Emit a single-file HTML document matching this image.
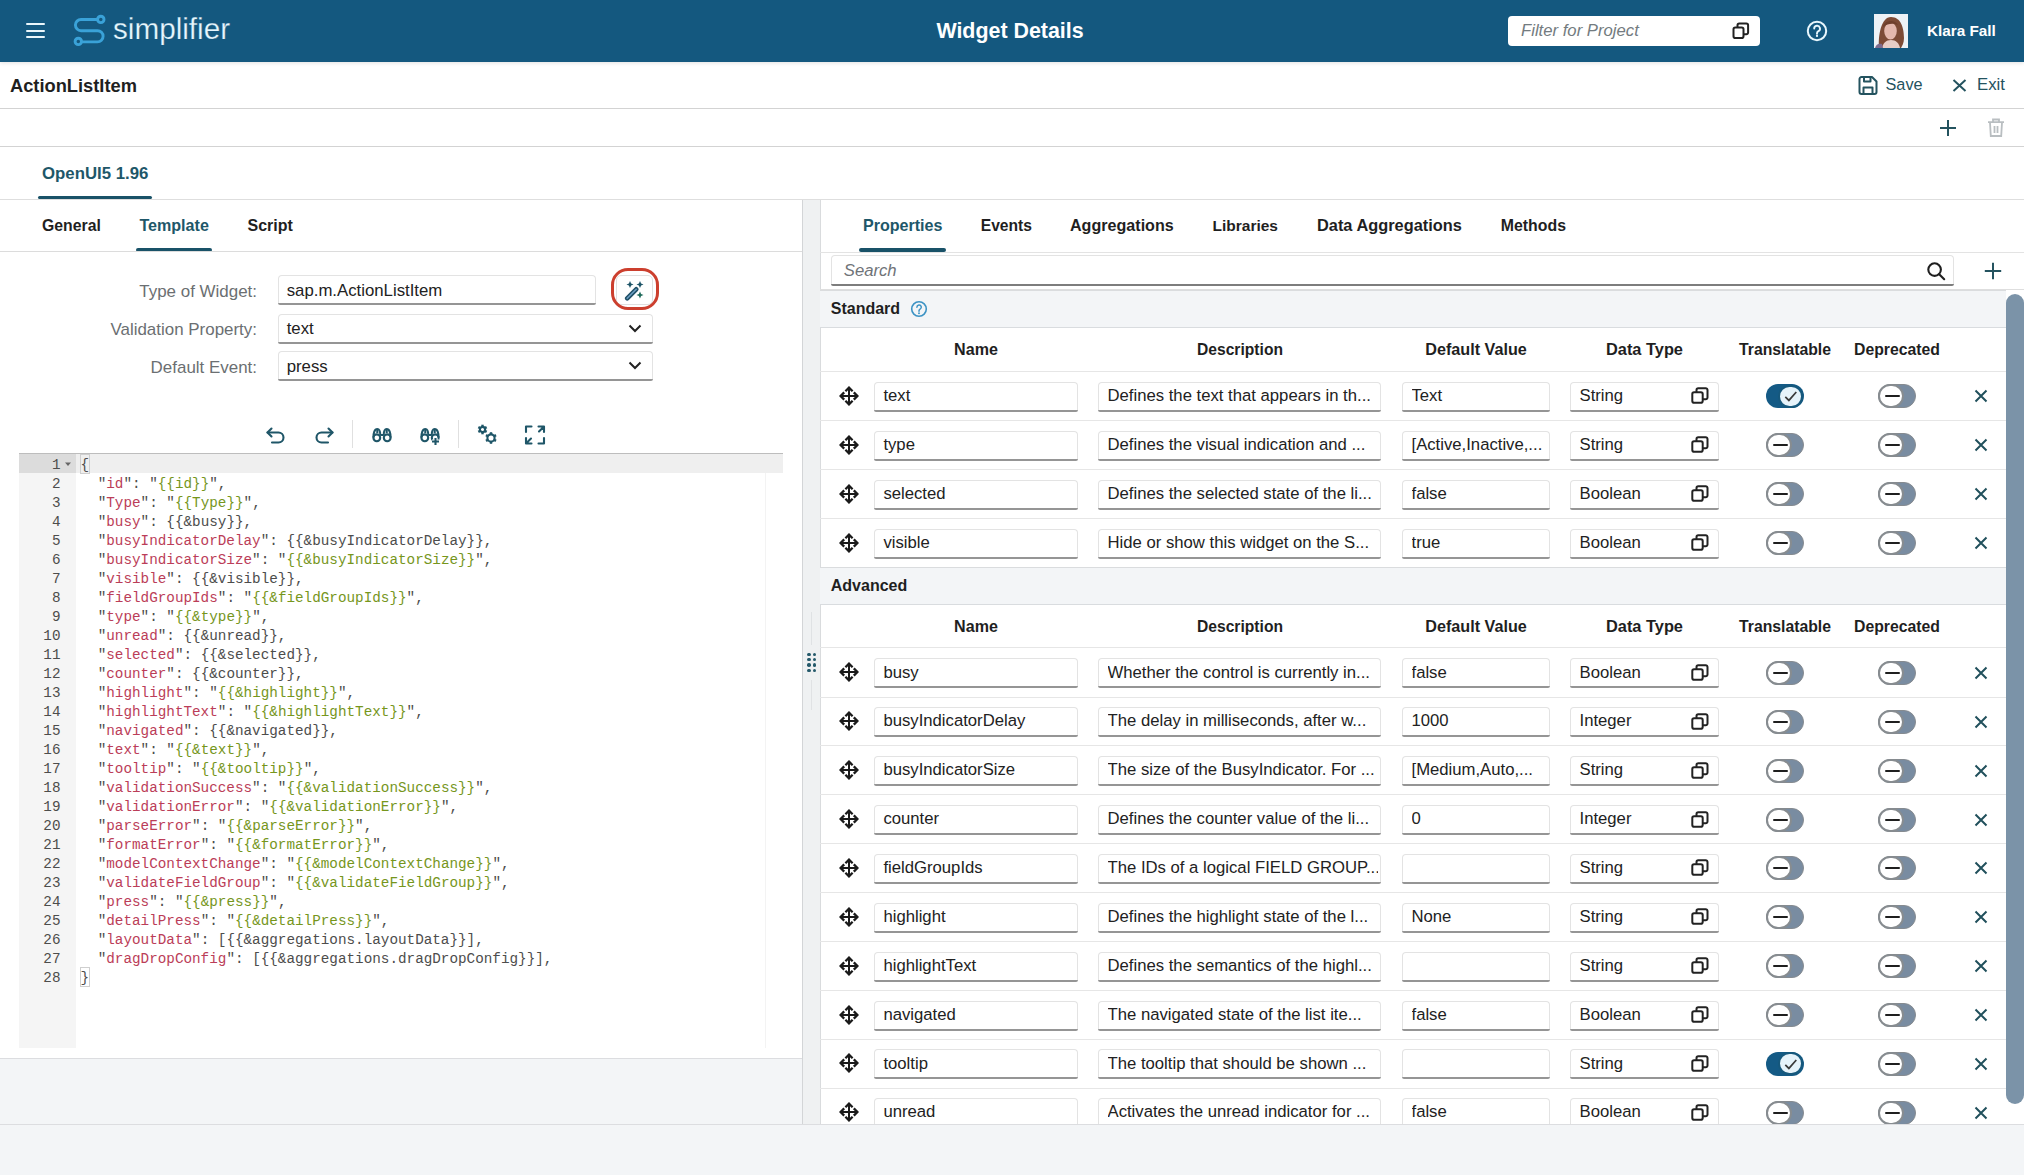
<!DOCTYPE html><html><head><meta charset="utf-8"><style>
html,body{margin:0;padding:0;width:2024px;height:1175px;overflow:hidden;background:#fff;font-family:"Liberation Sans",sans-serif;}
.t{position:absolute;white-space:pre;}
.m{position:absolute;white-space:pre;font-family:"Liberation Mono",monospace;}
</style></head><body><div style="position:absolute;left:0px;top:0px;width:2024px;height:61.5px;background:#14587f;box-shadow:0 1px 4px rgba(0,0,0,0.12)"></div><div style="position:absolute;left:26px;top:23px;width:19px;height:2.2px;background:#eaf6fb;border-radius:1px"></div><div style="position:absolute;left:26px;top:29.5px;width:19px;height:2.2px;background:#eaf6fb;border-radius:1px"></div><div style="position:absolute;left:26px;top:36px;width:19px;height:2.2px;background:#eaf6fb;border-radius:1px"></div><svg style="position:absolute;left:70px;top:12px" width="40" height="38" viewBox="0 0 40 38"><g fill="none" stroke="#3aa2d8" stroke-width="2.9" stroke-linecap="round">
<path d="M27.5 7.5 H11 a5.6 5.6 0 0 0 0 11.2 H27.5 a5.6 5.6 0 0 1 0 11.2 H12"/>
<circle cx="30.8" cy="7.4" r="3.2"/><circle cx="8.3" cy="29.4" r="3.2"/></g></svg><div class="t" style="left:113px;top:11px;font-size:29.7px;line-height:35.64px;color:#e6f6fd;font-weight:normal;font-style:normal;-webkit-text-stroke:0.25px #14587f;">simplifier</div><div class="t" style="left:710px;width:600px;text-align:center;top:19px;font-size:21.4px;line-height:25.68px;color:#ffffff;font-weight:bold;font-style:normal;">Widget Details</div><div style="position:absolute;left:1508px;top:15.5px;width:252px;height:30px;background:#fff;border-radius:4px"></div><div class="t" style="left:1521px;top:21px;font-size:16.7px;line-height:20.04px;color:#737b80;font-weight:normal;font-style:italic;">Filter for Project</div><svg style="position:absolute;left:1732px;top:22px" width="18" height="18" viewBox="0 0 18 18"><g fill="none" stroke="#222" stroke-width="2"><rect x="1.5" y="5.5" width="10" height="10.5" rx="1.8"/><path d="M5.5 5.5V3.3a1.8 1.8 0 0 1 1.8-1.8h7a1.8 1.8 0 0 1 1.8 1.8v7.2a1.8 1.8 0 0 1-1.8 1.8h-3"/></g></svg><svg style="position:absolute;left:1806px;top:20px" width="22" height="22" viewBox="0 0 22 22"><circle cx="11" cy="11" r="9.2" fill="none" stroke="#e9f7fd" stroke-width="2"/><path d="M8.2 8.6a2.9 2.9 0 1 1 4.2 2.6c-.9.5-1.4 1-1.4 2v.6" fill="none" stroke="#e9f7fd" stroke-width="1.9" stroke-linecap="round"/><circle cx="11" cy="15.9" r="1.15" fill="#e9f7fd"/></svg><svg style="position:absolute;left:1874px;top:14px" width="34" height="34" viewBox="0 0 34 34"><rect width="34" height="34" fill="#eef2f6"/>
<path d="M5 34 C4 22 7 3 17 3 C27 3 30 14 30 24 C30 29 28 32 27 34 Z" fill="#7d4b36"/>
<ellipse cx="16.5" cy="17" rx="6.3" ry="8.6" fill="#e4b8ad"/>
<path d="M9 13 C10 6 21 5 24 11 C20 9 14 9 9 13Z" fill="#6f3f2c"/>
<path d="M8 34 C9 29 12 26 17 26 C22 26 25 29 26 34Z" fill="#e6cdc6"/>
<path d="M1 34 C2 30 5 29 8 30 L9 34Z" fill="#7d6b8e"/></svg><div class="t" style="left:1927px;top:22px;font-size:15.3px;line-height:18.36px;color:#ffffff;font-weight:bold;font-style:normal;">Klara Fall</div><div class="t" style="left:10px;top:75px;font-size:18.3px;line-height:21.96px;color:#1f1f1f;font-weight:bold;font-style:normal;">ActionListItem</div><div style="position:absolute;left:0px;top:108px;width:2024px;height:1px;background:#d3d3d3"></div><svg style="position:absolute;left:1858px;top:75px" width="21" height="21" viewBox="0 0 21 21"><g fill="none" stroke="#24535f" stroke-width="2" stroke-linejoin="round"><path d="M3.5 2h10.5l4.5 4.5v10.5a2 2 0 0 1-2 2H3.5a2 2 0 0 1-2-2V4a2 2 0 0 1 2-2z"/><path d="M6 2v4.5h6.5V2M5.5 19v-6.5h9V19"/></g></svg><div class="t" style="left:1885.5px;top:75px;font-size:16.3px;line-height:19.56px;color:#24535f;font-weight:normal;font-style:normal;">Save</div><svg style="position:absolute;left:1952px;top:79px" width="15" height="13" viewBox="0 0 15 13"><path d="M1.5 1L13.5 12M13.5 1L1.5 12" stroke="#24535f" stroke-width="2"/></svg><div class="t" style="left:1977px;top:75px;font-size:16.8px;line-height:20.16px;color:#24535f;font-weight:normal;font-style:normal;">Exit</div><svg style="position:absolute;left:1939px;top:119px" width="18" height="18" viewBox="0 0 18 18"><path d="M9 1v16M1 9h16" stroke="#24535f" stroke-width="2"/></svg><svg style="position:absolute;left:1987px;top:118px" width="18" height="20" viewBox="0 0 18 20"><g fill="none" stroke="#b9bec1" stroke-width="1.8"><path d="M1 4.2h16M6 4V1.5h6V4M3 4.5l.8 13.5h10.4l.8-13.5M7.5 8v7M10.5 8v7"/></g></svg><div style="position:absolute;left:0px;top:146px;width:2024px;height:1px;background:#d3d3d3"></div><div class="t" style="left:42px;top:164px;font-size:16.8px;line-height:20.16px;color:#1e5769;font-weight:bold;font-style:normal;">OpenUI5 1.96</div><div style="position:absolute;left:38px;top:195.8px;width:114px;height:3.7px;background:#195268;border-radius:2px"></div><div style="position:absolute;left:0px;top:199px;width:2024px;height:1px;background:#dedede"></div><div class="t" style="left:42px;top:217px;font-size:15.8px;line-height:18.96px;color:#1f1f1f;font-weight:bold;font-style:normal;">General</div><div class="t" style="left:139.4px;top:216px;font-size:16.1px;line-height:19.32px;color:#1e5769;font-weight:bold;font-style:normal;">Template</div><div class="t" style="left:247.5px;top:216px;font-size:16.0px;line-height:19.2px;color:#1f1f1f;font-weight:bold;font-style:normal;">Script</div><div style="position:absolute;left:136px;top:248.3px;width:76px;height:3.7px;background:#195268;border-radius:2px"></div><div style="position:absolute;left:0px;top:251px;width:802px;height:1px;background:#dcdcdc"></div><div class="t" style="right:1767px;top:282px;font-size:16.95px;line-height:20.34px;color:#6b6f72;font-weight:normal;font-style:normal;">Type of Widget:</div><div class="t" style="right:1767px;top:320px;font-size:16.95px;line-height:20.34px;color:#6b6f72;font-weight:normal;font-style:normal;">Validation Property:</div><div class="t" style="right:1767px;top:358px;font-size:16.95px;line-height:20.34px;color:#6b6f72;font-weight:normal;font-style:normal;">Default Event:</div><div style="position:absolute;left:278.4px;top:275px;width:318px;height:28px;box-sizing:border-box;background:#fff;border:1px solid #e3e3e3;border-bottom:none;border-radius:4px 4px 0 0"></div><div style="position:absolute;left:278.4px;top:303px;width:318px;height:2px;background:#959595;border-radius:0 0 3px 3px"></div><div style="position:absolute;left:278.4px;top:313.7px;width:375px;height:28px;box-sizing:border-box;background:#fff;border:1px solid #e3e3e3;border-bottom:none;border-radius:4px 4px 0 0"></div><div style="position:absolute;left:278.4px;top:341.7px;width:375px;height:2px;background:#959595;border-radius:0 0 3px 3px"></div><div style="position:absolute;left:278.4px;top:351.3px;width:375px;height:28px;box-sizing:border-box;background:#fff;border:1px solid #e3e3e3;border-bottom:none;border-radius:4px 4px 0 0"></div><div style="position:absolute;left:278.4px;top:379.3px;width:375px;height:2px;background:#959595;border-radius:0 0 3px 3px"></div><div class="t" style="left:286.7px;top:281px;font-size:16.77px;line-height:20.12px;color:#222;font-weight:normal;font-style:normal;">sap.m.ActionListItem</div><div class="t" style="left:286.7px;top:319px;font-size:16.77px;line-height:20.12px;color:#222;font-weight:normal;font-style:normal;">text</div><div class="t" style="left:286.7px;top:357px;font-size:16.77px;line-height:20.12px;color:#222;font-weight:normal;font-style:normal;">press</div><svg style="position:absolute;left:628px;top:323.7px" width="14" height="9" viewBox="0 0 14 9"><path d="M1.5 1.5L7 7l5.5-5.5" fill="none" stroke="#222" stroke-width="2"/></svg><svg style="position:absolute;left:628px;top:361.4px" width="14" height="9" viewBox="0 0 14 9"><path d="M1.5 1.5L7 7l5.5-5.5" fill="none" stroke="#222" stroke-width="2"/></svg><div style="position:absolute;left:616px;top:275px;width:37px;height:30px;box-sizing:border-box;border:1px solid #e0e0e0;border-radius:5px;background:#fff"></div><div style="position:absolute;left:610.5px;top:268px;width:48px;height:41.5px;box-sizing:border-box;border:3.2px solid #cc3f2e;border-radius:17px"></div><svg style="position:absolute;left:624px;top:279.5px" width="22" height="21" viewBox="0 0 22 21"><g stroke-linecap="round"><path d="M3.2 18.3L12.2 9.3" stroke="#1f4f66" stroke-width="4.6"/><path d="M3.2 18.3L12.2 9.3" stroke="#6a9cc0" stroke-width="1.6"/></g><g fill="#1e5568"><path d="M6 1l1.1 2.4L9.5 4.5 7.1 5.6 6 8 4.9 5.6 2.5 4.5 4.9 3.4z"/><path d="M16 1l1.1 2.4 2.4 1.1-2.4 1.1L16 8l-1.1-2.4-2.4-1.1 2.4-1.1z"/><path d="M16 11.5l1.1 2.4 2.4 1.1-2.4 1.1L16 18.5l-1.1-2.4-2.4-1.1 2.4-1.1z" fill="#1e6a5a"/></g></svg><svg style="position:absolute;left:265px;top:425px" width="23" height="20" viewBox="0 0 23 20"><g fill="none" stroke="#1f5668" stroke-width="2.1" stroke-linecap="round" stroke-linejoin="round"><path d="M2.5 7.5h11a5 5 0 0 1 0 10H7"/><path d="M6.5 3.5l-4 4 4 4"/></g></svg><svg style="position:absolute;left:312px;top:425px" width="23" height="20" viewBox="0 0 23 20"><g fill="none" stroke="#1f5668" stroke-width="2.1" stroke-linecap="round" stroke-linejoin="round"><path d="M20.5 7.5h-11a5 5 0 0 0 0 10H16"/><path d="M16.5 3.5l4 4-4 4"/></g></svg><div style="position:absolute;left:352px;top:420px;width:1px;height:28px;background:#e0e0e0"></div><div style="position:absolute;left:458px;top:420px;width:1px;height:28px;background:#e0e0e0"></div><svg style="position:absolute;left:372px;top:427px" width="20" height="16" viewBox="0 0 20 16"><g fill="none" stroke="#1f5668" stroke-width="2.1"><circle cx="4.8" cy="10.8" r="3.4"/><circle cx="15.2" cy="10.8" r="3.4"/><path d="M1.4 10.5C1.4 6 2.5 2 5.3 2S8.3 5 8.3 8.5M18.6 10.5C18.6 6 17.5 2 14.7 2S11.7 5 11.7 8.5M8.3 8h3.4"/><path d="M5.3 2v4M14.7 2v4"/></g></svg><svg style="position:absolute;left:420px;top:427px" width="22" height="18" viewBox="0 0 22 18"><g fill="none" stroke="#1f5668" stroke-width="2.1"><circle cx="4.8" cy="10.8" r="3.4"/><circle cx="15.2" cy="10.8" r="3.4"/><path d="M1.4 10.5C1.4 6 2.5 2 5.3 2S8.3 5 8.3 8.5M18.6 10.5C18.6 6 17.5 2 14.7 2S11.7 5 11.7 8.5M8.3 8h3.4"/><path d="M5.3 2v4M14.7 2v4"/></g><path d="M15.5 11v7M12 14.5h7" stroke="#fff" stroke-width="4"/><path d="M15.5 11v7M12 14.5h7" stroke="#1f5668" stroke-width="2.1"/></svg><svg style="position:absolute;left:477px;top:424px" width="22" height="22" viewBox="0 0 22 22"><circle cx="5.5" cy="5.5" r="2.6" fill="none" stroke="#1f5668" stroke-width="2.1"/><path d="M5.5 0.6999999999999997v2.4" stroke="#1f5668" stroke-width="2.4" transform="rotate(0 5.5 5.5)"/><path d="M5.5 0.6999999999999997v2.4" stroke="#1f5668" stroke-width="2.4" transform="rotate(60 5.5 5.5)"/><path d="M5.5 0.6999999999999997v2.4" stroke="#1f5668" stroke-width="2.4" transform="rotate(120 5.5 5.5)"/><path d="M5.5 0.6999999999999997v2.4" stroke="#1f5668" stroke-width="2.4" transform="rotate(180 5.5 5.5)"/><path d="M5.5 0.6999999999999997v2.4" stroke="#1f5668" stroke-width="2.4" transform="rotate(240 5.5 5.5)"/><path d="M5.5 0.6999999999999997v2.4" stroke="#1f5668" stroke-width="2.4" transform="rotate(300 5.5 5.5)"/><circle cx="14" cy="14" r="3.6" fill="none" stroke="#1f5668" stroke-width="2.1"/><path d="M14 8.2v2.4" stroke="#1f5668" stroke-width="2.4" transform="rotate(0 14 14)"/><path d="M14 8.2v2.4" stroke="#1f5668" stroke-width="2.4" transform="rotate(60 14 14)"/><path d="M14 8.2v2.4" stroke="#1f5668" stroke-width="2.4" transform="rotate(120 14 14)"/><path d="M14 8.2v2.4" stroke="#1f5668" stroke-width="2.4" transform="rotate(180 14 14)"/><path d="M14 8.2v2.4" stroke="#1f5668" stroke-width="2.4" transform="rotate(240 14 14)"/><path d="M14 8.2v2.4" stroke="#1f5668" stroke-width="2.4" transform="rotate(300 14 14)"/></svg><svg style="position:absolute;left:524px;top:424px" width="22" height="22" viewBox="0 0 22 22"><g fill="none" stroke="#1f5668" stroke-width="2.1" stroke-linecap="round" stroke-linejoin="round"><path d="M2 8V2.5h5.5M14.5 2.5H20V8M20 14v5.5h-5.5M7.5 19.5H2V14M20 2.5l-5 5M2 19.5l5-5"/></g></svg><div style="position:absolute;left:18.5px;top:453px;width:764.5px;height:1px;background:#bdbdbd"></div><div style="position:absolute;left:18.5px;top:454px;width:57.5px;height:594px;background:#f5f5f5"></div><div style="position:absolute;left:76px;top:454px;width:707px;height:19px;background:#efefef"></div><div style="position:absolute;left:18.5px;top:454px;width:57.5px;height:19px;background:#dcdcdc"></div><div style="position:absolute;left:765px;top:473px;width:1px;height:575px;background:#f3f3f3"></div><div class="m" style="left:80.5px;top:455.89px;font-size:14.3px;line-height:19px"><span style="color:#4d4d4c">{</span></div><div class="m" style="left:20px;width:40.5px;text-align:right;top:455.89px;font-size:14.3px;line-height:19px;color:#4d4d4c">1</div><div class="m" style="left:80.5px;top:474.89px;font-size:14.3px;line-height:19px"><span style="color:#4d4d4c">  "</span><span style="color:#bb3d58">id</span><span style="color:#4d4d4c">": </span><span style="color:#4d4d4c">"</span><span style="color:#76961c">{{id}}</span><span style="color:#4d4d4c">",</span></div><div class="m" style="left:20px;width:40.5px;text-align:right;top:474.89px;font-size:14.3px;line-height:19px;color:#4d4d4c">2</div><div class="m" style="left:80.5px;top:493.89px;font-size:14.3px;line-height:19px"><span style="color:#4d4d4c">  "</span><span style="color:#bb3d58">Type</span><span style="color:#4d4d4c">": </span><span style="color:#4d4d4c">"</span><span style="color:#76961c">{{Type}}</span><span style="color:#4d4d4c">",</span></div><div class="m" style="left:20px;width:40.5px;text-align:right;top:493.89px;font-size:14.3px;line-height:19px;color:#4d4d4c">3</div><div class="m" style="left:80.5px;top:512.89px;font-size:14.3px;line-height:19px"><span style="color:#4d4d4c">  "</span><span style="color:#bb3d58">busy</span><span style="color:#4d4d4c">": </span><span style="color:#4d4d4c">{{&amp;busy}},</span></div><div class="m" style="left:20px;width:40.5px;text-align:right;top:512.89px;font-size:14.3px;line-height:19px;color:#4d4d4c">4</div><div class="m" style="left:80.5px;top:531.89px;font-size:14.3px;line-height:19px"><span style="color:#4d4d4c">  "</span><span style="color:#bb3d58">busyIndicatorDelay</span><span style="color:#4d4d4c">": </span><span style="color:#4d4d4c">{{&amp;busyIndicatorDelay}},</span></div><div class="m" style="left:20px;width:40.5px;text-align:right;top:531.89px;font-size:14.3px;line-height:19px;color:#4d4d4c">5</div><div class="m" style="left:80.5px;top:550.89px;font-size:14.3px;line-height:19px"><span style="color:#4d4d4c">  "</span><span style="color:#bb3d58">busyIndicatorSize</span><span style="color:#4d4d4c">": </span><span style="color:#4d4d4c">"</span><span style="color:#76961c">{{&amp;busyIndicatorSize}}</span><span style="color:#4d4d4c">",</span></div><div class="m" style="left:20px;width:40.5px;text-align:right;top:550.89px;font-size:14.3px;line-height:19px;color:#4d4d4c">6</div><div class="m" style="left:80.5px;top:569.89px;font-size:14.3px;line-height:19px"><span style="color:#4d4d4c">  "</span><span style="color:#bb3d58">visible</span><span style="color:#4d4d4c">": </span><span style="color:#4d4d4c">{{&amp;visible}},</span></div><div class="m" style="left:20px;width:40.5px;text-align:right;top:569.89px;font-size:14.3px;line-height:19px;color:#4d4d4c">7</div><div class="m" style="left:80.5px;top:588.89px;font-size:14.3px;line-height:19px"><span style="color:#4d4d4c">  "</span><span style="color:#bb3d58">fieldGroupIds</span><span style="color:#4d4d4c">": </span><span style="color:#4d4d4c">"</span><span style="color:#76961c">{{&amp;fieldGroupIds}}</span><span style="color:#4d4d4c">",</span></div><div class="m" style="left:20px;width:40.5px;text-align:right;top:588.89px;font-size:14.3px;line-height:19px;color:#4d4d4c">8</div><div class="m" style="left:80.5px;top:607.89px;font-size:14.3px;line-height:19px"><span style="color:#4d4d4c">  "</span><span style="color:#bb3d58">type</span><span style="color:#4d4d4c">": </span><span style="color:#4d4d4c">"</span><span style="color:#76961c">{{&amp;type}}</span><span style="color:#4d4d4c">",</span></div><div class="m" style="left:20px;width:40.5px;text-align:right;top:607.89px;font-size:14.3px;line-height:19px;color:#4d4d4c">9</div><div class="m" style="left:80.5px;top:626.89px;font-size:14.3px;line-height:19px"><span style="color:#4d4d4c">  "</span><span style="color:#bb3d58">unread</span><span style="color:#4d4d4c">": </span><span style="color:#4d4d4c">{{&amp;unread}},</span></div><div class="m" style="left:20px;width:40.5px;text-align:right;top:626.89px;font-size:14.3px;line-height:19px;color:#4d4d4c">10</div><div class="m" style="left:80.5px;top:645.89px;font-size:14.3px;line-height:19px"><span style="color:#4d4d4c">  "</span><span style="color:#bb3d58">selected</span><span style="color:#4d4d4c">": </span><span style="color:#4d4d4c">{{&amp;selected}},</span></div><div class="m" style="left:20px;width:40.5px;text-align:right;top:645.89px;font-size:14.3px;line-height:19px;color:#4d4d4c">11</div><div class="m" style="left:80.5px;top:664.89px;font-size:14.3px;line-height:19px"><span style="color:#4d4d4c">  "</span><span style="color:#bb3d58">counter</span><span style="color:#4d4d4c">": </span><span style="color:#4d4d4c">{{&amp;counter}},</span></div><div class="m" style="left:20px;width:40.5px;text-align:right;top:664.89px;font-size:14.3px;line-height:19px;color:#4d4d4c">12</div><div class="m" style="left:80.5px;top:683.89px;font-size:14.3px;line-height:19px"><span style="color:#4d4d4c">  "</span><span style="color:#bb3d58">highlight</span><span style="color:#4d4d4c">": </span><span style="color:#4d4d4c">"</span><span style="color:#76961c">{{&amp;highlight}}</span><span style="color:#4d4d4c">",</span></div><div class="m" style="left:20px;width:40.5px;text-align:right;top:683.89px;font-size:14.3px;line-height:19px;color:#4d4d4c">13</div><div class="m" style="left:80.5px;top:702.89px;font-size:14.3px;line-height:19px"><span style="color:#4d4d4c">  "</span><span style="color:#bb3d58">highlightText</span><span style="color:#4d4d4c">": </span><span style="color:#4d4d4c">"</span><span style="color:#76961c">{{&amp;highlightText}}</span><span style="color:#4d4d4c">",</span></div><div class="m" style="left:20px;width:40.5px;text-align:right;top:702.89px;font-size:14.3px;line-height:19px;color:#4d4d4c">14</div><div class="m" style="left:80.5px;top:721.89px;font-size:14.3px;line-height:19px"><span style="color:#4d4d4c">  "</span><span style="color:#bb3d58">navigated</span><span style="color:#4d4d4c">": </span><span style="color:#4d4d4c">{{&amp;navigated}},</span></div><div class="m" style="left:20px;width:40.5px;text-align:right;top:721.89px;font-size:14.3px;line-height:19px;color:#4d4d4c">15</div><div class="m" style="left:80.5px;top:740.89px;font-size:14.3px;line-height:19px"><span style="color:#4d4d4c">  "</span><span style="color:#bb3d58">text</span><span style="color:#4d4d4c">": </span><span style="color:#4d4d4c">"</span><span style="color:#76961c">{{&amp;text}}</span><span style="color:#4d4d4c">",</span></div><div class="m" style="left:20px;width:40.5px;text-align:right;top:740.89px;font-size:14.3px;line-height:19px;color:#4d4d4c">16</div><div class="m" style="left:80.5px;top:759.89px;font-size:14.3px;line-height:19px"><span style="color:#4d4d4c">  "</span><span style="color:#bb3d58">tooltip</span><span style="color:#4d4d4c">": </span><span style="color:#4d4d4c">"</span><span style="color:#76961c">{{&amp;tooltip}}</span><span style="color:#4d4d4c">",</span></div><div class="m" style="left:20px;width:40.5px;text-align:right;top:759.89px;font-size:14.3px;line-height:19px;color:#4d4d4c">17</div><div class="m" style="left:80.5px;top:778.89px;font-size:14.3px;line-height:19px"><span style="color:#4d4d4c">  "</span><span style="color:#bb3d58">validationSuccess</span><span style="color:#4d4d4c">": </span><span style="color:#4d4d4c">"</span><span style="color:#76961c">{{&amp;validationSuccess}}</span><span style="color:#4d4d4c">",</span></div><div class="m" style="left:20px;width:40.5px;text-align:right;top:778.89px;font-size:14.3px;line-height:19px;color:#4d4d4c">18</div><div class="m" style="left:80.5px;top:797.89px;font-size:14.3px;line-height:19px"><span style="color:#4d4d4c">  "</span><span style="color:#bb3d58">validationError</span><span style="color:#4d4d4c">": </span><span style="color:#4d4d4c">"</span><span style="color:#76961c">{{&amp;validationError}}</span><span style="color:#4d4d4c">",</span></div><div class="m" style="left:20px;width:40.5px;text-align:right;top:797.89px;font-size:14.3px;line-height:19px;color:#4d4d4c">19</div><div class="m" style="left:80.5px;top:816.89px;font-size:14.3px;line-height:19px"><span style="color:#4d4d4c">  "</span><span style="color:#bb3d58">parseError</span><span style="color:#4d4d4c">": </span><span style="color:#4d4d4c">"</span><span style="color:#76961c">{{&amp;parseError}}</span><span style="color:#4d4d4c">",</span></div><div class="m" style="left:20px;width:40.5px;text-align:right;top:816.89px;font-size:14.3px;line-height:19px;color:#4d4d4c">20</div><div class="m" style="left:80.5px;top:835.89px;font-size:14.3px;line-height:19px"><span style="color:#4d4d4c">  "</span><span style="color:#bb3d58">formatError</span><span style="color:#4d4d4c">": </span><span style="color:#4d4d4c">"</span><span style="color:#76961c">{{&amp;formatError}}</span><span style="color:#4d4d4c">",</span></div><div class="m" style="left:20px;width:40.5px;text-align:right;top:835.89px;font-size:14.3px;line-height:19px;color:#4d4d4c">21</div><div class="m" style="left:80.5px;top:854.89px;font-size:14.3px;line-height:19px"><span style="color:#4d4d4c">  "</span><span style="color:#bb3d58">modelContextChange</span><span style="color:#4d4d4c">": </span><span style="color:#4d4d4c">"</span><span style="color:#76961c">{{&amp;modelContextChange}}</span><span style="color:#4d4d4c">",</span></div><div class="m" style="left:20px;width:40.5px;text-align:right;top:854.89px;font-size:14.3px;line-height:19px;color:#4d4d4c">22</div><div class="m" style="left:80.5px;top:873.89px;font-size:14.3px;line-height:19px"><span style="color:#4d4d4c">  "</span><span style="color:#bb3d58">validateFieldGroup</span><span style="color:#4d4d4c">": </span><span style="color:#4d4d4c">"</span><span style="color:#76961c">{{&amp;validateFieldGroup}}</span><span style="color:#4d4d4c">",</span></div><div class="m" style="left:20px;width:40.5px;text-align:right;top:873.89px;font-size:14.3px;line-height:19px;color:#4d4d4c">23</div><div class="m" style="left:80.5px;top:892.89px;font-size:14.3px;line-height:19px"><span style="color:#4d4d4c">  "</span><span style="color:#bb3d58">press</span><span style="color:#4d4d4c">": </span><span style="color:#4d4d4c">"</span><span style="color:#76961c">{{&amp;press}}</span><span style="color:#4d4d4c">",</span></div><div class="m" style="left:20px;width:40.5px;text-align:right;top:892.89px;font-size:14.3px;line-height:19px;color:#4d4d4c">24</div><div class="m" style="left:80.5px;top:911.89px;font-size:14.3px;line-height:19px"><span style="color:#4d4d4c">  "</span><span style="color:#bb3d58">detailPress</span><span style="color:#4d4d4c">": </span><span style="color:#4d4d4c">"</span><span style="color:#76961c">{{&amp;detailPress}}</span><span style="color:#4d4d4c">",</span></div><div class="m" style="left:20px;width:40.5px;text-align:right;top:911.89px;font-size:14.3px;line-height:19px;color:#4d4d4c">25</div><div class="m" style="left:80.5px;top:930.89px;font-size:14.3px;line-height:19px"><span style="color:#4d4d4c">  "</span><span style="color:#bb3d58">layoutData</span><span style="color:#4d4d4c">": </span><span style="color:#4d4d4c">[{{&amp;aggregations.layoutData}}],</span></div><div class="m" style="left:20px;width:40.5px;text-align:right;top:930.89px;font-size:14.3px;line-height:19px;color:#4d4d4c">26</div><div class="m" style="left:80.5px;top:949.89px;font-size:14.3px;line-height:19px"><span style="color:#4d4d4c">  "</span><span style="color:#bb3d58">dragDropConfig</span><span style="color:#4d4d4c">": </span><span style="color:#4d4d4c">[{{&amp;aggregations.dragDropConfig}}],</span></div><div class="m" style="left:20px;width:40.5px;text-align:right;top:949.89px;font-size:14.3px;line-height:19px;color:#4d4d4c">27</div><div class="m" style="left:80.5px;top:968.89px;font-size:14.3px;line-height:19px"><span style="color:#4d4d4c">}</span></div><div class="m" style="left:20px;width:40.5px;text-align:right;top:968.89px;font-size:14.3px;line-height:19px;color:#4d4d4c">28</div><svg style="position:absolute;left:64px;top:461px" width="8" height="6" viewBox="0 0 8 6"><path d="M1 1.5h6L4 5z" fill="#666"/></svg><div style="position:absolute;left:79.5px;top:966.5px;width:10px;height:20.5px;box-sizing:border-box;border:1px solid #cfcfcf"></div><div style="position:absolute;left:79.5px;top:454px;width:10px;height:19.5px;box-sizing:border-box;border:1px solid #cfcfcf"></div><div style="position:absolute;left:0px;top:1058px;width:802px;height:1px;background:#dcdde0"></div><div style="position:absolute;left:0px;top:1059px;width:802px;height:65px;background:#f3f5f7"></div><div style="position:absolute;left:0px;top:1124px;width:2024px;height:1px;background:#dcdde0"></div><div style="position:absolute;left:0px;top:1125px;width:2024px;height:50px;background:#f3f5f7"></div><div style="position:absolute;left:802px;top:200px;width:19px;height:924px;box-sizing:border-box;background:#eff1f2;border-left:1px solid #d3d5d7;border-right:1px solid #d9dbdd"></div><div style="position:absolute;left:810.5px;top:612px;width:1px;height:33px;background:#dfe2e4"></div><div style="position:absolute;left:810.5px;top:680px;width:1px;height:30px;background:#e0e2e4"></div><div style="position:absolute;left:807.0px;top:652.6px;width:3.5px;height:3.5px;background:#24596a;border-radius:50%"></div><div style="position:absolute;left:812.6px;top:652.6px;width:3.5px;height:3.5px;background:#24596a;border-radius:50%"></div><div style="position:absolute;left:807.0px;top:657.9px;width:3.5px;height:3.5px;background:#24596a;border-radius:50%"></div><div style="position:absolute;left:812.6px;top:657.9px;width:3.5px;height:3.5px;background:#24596a;border-radius:50%"></div><div style="position:absolute;left:807.0px;top:663.2px;width:3.5px;height:3.5px;background:#24596a;border-radius:50%"></div><div style="position:absolute;left:812.6px;top:663.2px;width:3.5px;height:3.5px;background:#24596a;border-radius:50%"></div><div style="position:absolute;left:807.0px;top:668.5px;width:3.5px;height:3.5px;background:#24596a;border-radius:50%"></div><div style="position:absolute;left:812.6px;top:668.5px;width:3.5px;height:3.5px;background:#24596a;border-radius:50%"></div><div style="position:absolute;left:821px;top:200px;width:1203px;height:924px;background:#fff"></div><div class="t" style="left:863px;top:216px;font-size:16.07px;line-height:19.28px;color:#1e5769;font-weight:bold;font-style:normal;">Properties</div><div class="t" style="left:980.75px;top:217px;font-size:15.63px;line-height:18.76px;color:#1f1f1f;font-weight:bold;font-style:normal;">Events</div><div class="t" style="left:1070px;top:216px;font-size:16.1px;line-height:19.32px;color:#1f1f1f;font-weight:bold;font-style:normal;">Aggregations</div><div class="t" style="left:1212.5px;top:217px;font-size:15.5px;line-height:18.6px;color:#1f1f1f;font-weight:bold;font-style:normal;">Libraries</div><div class="t" style="left:1317px;top:216px;font-size:16.38px;line-height:19.66px;color:#1f1f1f;font-weight:bold;font-style:normal;">Data Aggregations</div><div class="t" style="left:1500.75px;top:216px;font-size:15.87px;line-height:19.04px;color:#1f1f1f;font-weight:bold;font-style:normal;">Methods</div><div style="position:absolute;left:858.75px;top:248.3px;width:87.25px;height:3.7px;background:#195268;border-radius:2px"></div><div style="position:absolute;left:820px;top:252px;width:1204px;height:1px;background:#e3e3e3"></div><div style="position:absolute;left:831px;top:255px;width:1123px;height:28.5px;box-sizing:border-box;background:#fff;border:1px solid #e3e3e3;border-bottom:none;border-radius:4px 4px 0 0"></div><div style="position:absolute;left:831px;top:283.5px;width:1123px;height:2px;background:#7d7d7d;border-radius:0 0 3px 3px"></div><div class="t" style="left:843.75px;top:261px;font-size:16.7px;line-height:20.04px;color:#6f7378;font-weight:normal;font-style:italic;">Search</div><svg style="position:absolute;left:1926px;top:261px" width="21" height="20" viewBox="0 0 21 20"><g fill="none" stroke="#1f1f1f" stroke-width="2.1"><circle cx="8.6" cy="8.6" r="6.3"/><path d="M13.2 13.2l5 5" stroke-linecap="round"/></g></svg><svg style="position:absolute;left:1984px;top:262px" width="18" height="18" viewBox="0 0 18 18"><path d="M9 0.8v16.4M0.8 9h16.4" stroke="#24535f" stroke-width="2"/></svg><div style="position:absolute;left:820px;top:289px;width:1204px;height:1px;background:#dedede"></div><div style="position:absolute;left:820px;top:290px;width:1186px;height:37.5px;background:#f3f5f7"></div><div style="position:absolute;left:820px;top:326.5px;width:1186px;height:1px;background:#d9dcdf"></div><div style="position:absolute;left:820px;top:290px;width:1186px;height:1px;background:#dadcde"></div><div class="t" style="left:830.75px;top:299px;font-size:16.0px;line-height:19.2px;color:#1f1f1f;font-weight:bold;font-style:normal;">Standard</div><svg style="position:absolute;left:909.5px;top:299.5px" width="18" height="18" viewBox="0 0 18 18"><circle cx="9" cy="9" r="7.3" fill="none" stroke="#3d93c4" stroke-width="1.6"/><path d="M6.9 7.2a2.2 2.2 0 1 1 3.2 2c-.7.4-1.1.8-1.1 1.6v.4" fill="none" stroke="#3d93c4" stroke-width="1.5" stroke-linecap="round"/><circle cx="9" cy="13.2" r=".95" fill="#3d93c4"/></svg><div class="t" style="left:676px;width:600px;text-align:center;top:340px;font-size:16.08px;line-height:19.3px;color:#1f1f1f;font-weight:bold;font-style:normal;">Name</div><div class="t" style="left:940px;width:600px;text-align:center;top:341px;font-size:15.63px;line-height:18.76px;color:#1f1f1f;font-weight:bold;font-style:normal;">Description</div><div class="t" style="left:1176px;width:600px;text-align:center;top:340px;font-size:16.18px;line-height:19.42px;color:#1f1f1f;font-weight:bold;font-style:normal;">Default Value</div><div class="t" style="left:1344.5px;width:600px;text-align:center;top:340px;font-size:16.37px;line-height:19.64px;color:#1f1f1f;font-weight:bold;font-style:normal;">Data Type</div><div class="t" style="left:1485px;width:600px;text-align:center;top:341px;font-size:15.77px;line-height:18.92px;color:#1f1f1f;font-weight:bold;font-style:normal;">Translatable</div><div class="t" style="left:1597px;width:600px;text-align:center;top:341px;font-size:15.79px;line-height:18.95px;color:#1f1f1f;font-weight:bold;font-style:normal;">Deprecated</div><div style="position:absolute;left:820px;top:370.5px;width:1186px;height:1px;background:#e6e6e6"></div><svg style="position:absolute;left:839.4px;top:385.9px" width="20" height="20" viewBox="0 0 20 20"><g stroke="#1a1a1a" fill="none" stroke-width="2.3" stroke-linecap="butt" stroke-linejoin="miter"><path d="M10 2v16M2 10h16" stroke-width="2"/><path d="M6.4 5.2L10 1.6l3.6 3.6M6.4 14.8L10 18.4l3.6-3.6M5.2 6.4L1.6 10l3.6 3.6M14.8 6.4L18.4 10l-3.6 3.6"/></g></svg><div style="position:absolute;left:874px;top:381.9px;width:204px;height:28px;box-sizing:border-box;background:#fff;border:1px solid #e3e3e3;border-bottom:none;border-radius:4px 4px 0 0"></div><div style="position:absolute;left:874px;top:409.9px;width:204px;height:2px;background:#959595;border-radius:0 0 3px 3px"></div><div style="position:absolute;left:1098px;top:381.9px;width:283px;height:28px;box-sizing:border-box;background:#fff;border:1px solid #e3e3e3;border-bottom:none;border-radius:4px 4px 0 0"></div><div style="position:absolute;left:1098px;top:409.9px;width:283px;height:2px;background:#959595;border-radius:0 0 3px 3px"></div><div style="position:absolute;left:1402px;top:381.9px;width:148px;height:28px;box-sizing:border-box;background:#fff;border:1px solid #e3e3e3;border-bottom:none;border-radius:4px 4px 0 0"></div><div style="position:absolute;left:1402px;top:409.9px;width:148px;height:2px;background:#959595;border-radius:0 0 3px 3px"></div><div style="position:absolute;left:1570px;top:381.9px;width:149px;height:28px;box-sizing:border-box;background:#fff;border:1px solid #e3e3e3;border-bottom:none;border-radius:4px 4px 0 0"></div><div style="position:absolute;left:1570px;top:409.9px;width:149px;height:2px;background:#959595;border-radius:0 0 3px 3px"></div><div class="t" style="left:883.4px;top:386px;font-size:16.7px;line-height:20.04px;color:#222;font-weight:normal;font-style:normal;">text</div><div class="t" style="left:1107.5px;top:386px;font-size:16.7px;line-height:20.04px;color:#222;font-weight:normal;font-style:normal;width:270.5px;overflow:hidden;">Defines the text that appears in th...</div><div class="t" style="left:1411.5px;top:386px;font-size:16.7px;line-height:20.04px;color:#222;font-weight:normal;font-style:normal;width:134.5px;overflow:hidden;">Text</div><div class="t" style="left:1579.5px;top:386px;font-size:16.7px;line-height:20.04px;color:#222;font-weight:normal;font-style:normal;">String</div><svg style="position:absolute;left:1691px;top:387.4px" width="18" height="18" viewBox="0 0 18 18"><g fill="none" stroke="#222" stroke-width="2"><rect x="1.3" y="5.3" width="10.4" height="10.4" rx="1.8"/><path d="M5.5 5.3V3.1a1.8 1.8 0 0 1 1.8-1.8h7.4a1.8 1.8 0 0 1 1.8 1.8v7.4a1.8 1.8 0 0 1-1.8 1.8h-3"/></g></svg><div style="position:absolute;left:1766px;top:384.4px;width:38px;height:24px;background:#145a85;border-radius:12px"></div><div style="position:absolute;left:1777.5px;top:384.9px;width:25.5px;height:23px;box-sizing:border-box;background:#e6f3fa;border:2px solid #16587c;border-radius:12px"></div><svg style="position:absolute;left:1782.5px;top:389.4px" width="16" height="14" viewBox="0 0 16 14"><path d="M2.3 7.8l3.6 3.6L13.3 3" fill="none" stroke="#3a3a3a" stroke-width="1.7"/></svg><div style="position:absolute;left:1878px;top:384.4px;width:38px;height:24px;box-sizing:border-box;background:#798ca1;border:1.8px solid #868b90;border-radius:12px"></div><div style="position:absolute;left:1878px;top:384.4px;width:26px;height:24px;box-sizing:border-box;background:#fff;border:2px solid #878c90;border-radius:12px"></div><div style="position:absolute;left:1885px;top:395.4px;width:14.5px;height:2px;background:#1f1f1f;border-radius:1px"></div><svg style="position:absolute;left:1974px;top:389.4px" width="14" height="14" viewBox="0 0 14 14"><path d="M1.5 1.5l11 11M12.5 1.5l-11 11" stroke="#21505c" stroke-width="2"/></svg><div style="position:absolute;left:820px;top:420.075px;width:1186px;height:1px;background:#e6e6e6"></div><svg style="position:absolute;left:839.4px;top:434.775px" width="20" height="20" viewBox="0 0 20 20"><g stroke="#1a1a1a" fill="none" stroke-width="2.3" stroke-linecap="butt" stroke-linejoin="miter"><path d="M10 2v16M2 10h16" stroke-width="2"/><path d="M6.4 5.2L10 1.6l3.6 3.6M6.4 14.8L10 18.4l3.6-3.6M5.2 6.4L1.6 10l3.6 3.6M14.8 6.4L18.4 10l-3.6 3.6"/></g></svg><div style="position:absolute;left:874px;top:430.775px;width:204px;height:28px;box-sizing:border-box;background:#fff;border:1px solid #e3e3e3;border-bottom:none;border-radius:4px 4px 0 0"></div><div style="position:absolute;left:874px;top:458.775px;width:204px;height:2px;background:#959595;border-radius:0 0 3px 3px"></div><div style="position:absolute;left:1098px;top:430.775px;width:283px;height:28px;box-sizing:border-box;background:#fff;border:1px solid #e3e3e3;border-bottom:none;border-radius:4px 4px 0 0"></div><div style="position:absolute;left:1098px;top:458.775px;width:283px;height:2px;background:#959595;border-radius:0 0 3px 3px"></div><div style="position:absolute;left:1402px;top:430.775px;width:148px;height:28px;box-sizing:border-box;background:#fff;border:1px solid #e3e3e3;border-bottom:none;border-radius:4px 4px 0 0"></div><div style="position:absolute;left:1402px;top:458.775px;width:148px;height:2px;background:#959595;border-radius:0 0 3px 3px"></div><div style="position:absolute;left:1570px;top:430.775px;width:149px;height:28px;box-sizing:border-box;background:#fff;border:1px solid #e3e3e3;border-bottom:none;border-radius:4px 4px 0 0"></div><div style="position:absolute;left:1570px;top:458.775px;width:149px;height:2px;background:#959595;border-radius:0 0 3px 3px"></div><div class="t" style="left:883.4px;top:435px;font-size:16.7px;line-height:20.04px;color:#222;font-weight:normal;font-style:normal;">type</div><div class="t" style="left:1107.5px;top:435px;font-size:16.7px;line-height:20.04px;color:#222;font-weight:normal;font-style:normal;width:270.5px;overflow:hidden;">Defines the visual indication and ...</div><div class="t" style="left:1411.5px;top:435px;font-size:16.7px;line-height:20.04px;color:#222;font-weight:normal;font-style:normal;width:134.5px;overflow:hidden;">[Active,Inactive,...</div><div class="t" style="left:1579.5px;top:435px;font-size:16.7px;line-height:20.04px;color:#222;font-weight:normal;font-style:normal;">String</div><svg style="position:absolute;left:1691px;top:436.275px" width="18" height="18" viewBox="0 0 18 18"><g fill="none" stroke="#222" stroke-width="2"><rect x="1.3" y="5.3" width="10.4" height="10.4" rx="1.8"/><path d="M5.5 5.3V3.1a1.8 1.8 0 0 1 1.8-1.8h7.4a1.8 1.8 0 0 1 1.8 1.8v7.4a1.8 1.8 0 0 1-1.8 1.8h-3"/></g></svg><div style="position:absolute;left:1766px;top:433.275px;width:38px;height:24px;box-sizing:border-box;background:#798ca1;border:1.8px solid #868b90;border-radius:12px"></div><div style="position:absolute;left:1766px;top:433.275px;width:26px;height:24px;box-sizing:border-box;background:#fff;border:2px solid #878c90;border-radius:12px"></div><div style="position:absolute;left:1773px;top:444.275px;width:14.5px;height:2px;background:#1f1f1f;border-radius:1px"></div><div style="position:absolute;left:1878px;top:433.275px;width:38px;height:24px;box-sizing:border-box;background:#798ca1;border:1.8px solid #868b90;border-radius:12px"></div><div style="position:absolute;left:1878px;top:433.275px;width:26px;height:24px;box-sizing:border-box;background:#fff;border:2px solid #878c90;border-radius:12px"></div><div style="position:absolute;left:1885px;top:444.275px;width:14.5px;height:2px;background:#1f1f1f;border-radius:1px"></div><svg style="position:absolute;left:1974px;top:438.275px" width="14" height="14" viewBox="0 0 14 14"><path d="M1.5 1.5l11 11M12.5 1.5l-11 11" stroke="#21505c" stroke-width="2"/></svg><div style="position:absolute;left:820px;top:468.95px;width:1186px;height:1px;background:#e6e6e6"></div><svg style="position:absolute;left:839.4px;top:483.65px" width="20" height="20" viewBox="0 0 20 20"><g stroke="#1a1a1a" fill="none" stroke-width="2.3" stroke-linecap="butt" stroke-linejoin="miter"><path d="M10 2v16M2 10h16" stroke-width="2"/><path d="M6.4 5.2L10 1.6l3.6 3.6M6.4 14.8L10 18.4l3.6-3.6M5.2 6.4L1.6 10l3.6 3.6M14.8 6.4L18.4 10l-3.6 3.6"/></g></svg><div style="position:absolute;left:874px;top:479.65px;width:204px;height:28px;box-sizing:border-box;background:#fff;border:1px solid #e3e3e3;border-bottom:none;border-radius:4px 4px 0 0"></div><div style="position:absolute;left:874px;top:507.65px;width:204px;height:2px;background:#959595;border-radius:0 0 3px 3px"></div><div style="position:absolute;left:1098px;top:479.65px;width:283px;height:28px;box-sizing:border-box;background:#fff;border:1px solid #e3e3e3;border-bottom:none;border-radius:4px 4px 0 0"></div><div style="position:absolute;left:1098px;top:507.65px;width:283px;height:2px;background:#959595;border-radius:0 0 3px 3px"></div><div style="position:absolute;left:1402px;top:479.65px;width:148px;height:28px;box-sizing:border-box;background:#fff;border:1px solid #e3e3e3;border-bottom:none;border-radius:4px 4px 0 0"></div><div style="position:absolute;left:1402px;top:507.65px;width:148px;height:2px;background:#959595;border-radius:0 0 3px 3px"></div><div style="position:absolute;left:1570px;top:479.65px;width:149px;height:28px;box-sizing:border-box;background:#fff;border:1px solid #e3e3e3;border-bottom:none;border-radius:4px 4px 0 0"></div><div style="position:absolute;left:1570px;top:507.65px;width:149px;height:2px;background:#959595;border-radius:0 0 3px 3px"></div><div class="t" style="left:883.4px;top:484px;font-size:16.7px;line-height:20.04px;color:#222;font-weight:normal;font-style:normal;">selected</div><div class="t" style="left:1107.5px;top:484px;font-size:16.7px;line-height:20.04px;color:#222;font-weight:normal;font-style:normal;width:270.5px;overflow:hidden;">Defines the selected state of the li...</div><div class="t" style="left:1411.5px;top:484px;font-size:16.7px;line-height:20.04px;color:#222;font-weight:normal;font-style:normal;width:134.5px;overflow:hidden;">false</div><div class="t" style="left:1579.5px;top:484px;font-size:16.7px;line-height:20.04px;color:#222;font-weight:normal;font-style:normal;">Boolean</div><svg style="position:absolute;left:1691px;top:485.15px" width="18" height="18" viewBox="0 0 18 18"><g fill="none" stroke="#222" stroke-width="2"><rect x="1.3" y="5.3" width="10.4" height="10.4" rx="1.8"/><path d="M5.5 5.3V3.1a1.8 1.8 0 0 1 1.8-1.8h7.4a1.8 1.8 0 0 1 1.8 1.8v7.4a1.8 1.8 0 0 1-1.8 1.8h-3"/></g></svg><div style="position:absolute;left:1766px;top:482.15px;width:38px;height:24px;box-sizing:border-box;background:#798ca1;border:1.8px solid #868b90;border-radius:12px"></div><div style="position:absolute;left:1766px;top:482.15px;width:26px;height:24px;box-sizing:border-box;background:#fff;border:2px solid #878c90;border-radius:12px"></div><div style="position:absolute;left:1773px;top:493.15px;width:14.5px;height:2px;background:#1f1f1f;border-radius:1px"></div><div style="position:absolute;left:1878px;top:482.15px;width:38px;height:24px;box-sizing:border-box;background:#798ca1;border:1.8px solid #868b90;border-radius:12px"></div><div style="position:absolute;left:1878px;top:482.15px;width:26px;height:24px;box-sizing:border-box;background:#fff;border:2px solid #878c90;border-radius:12px"></div><div style="position:absolute;left:1885px;top:493.15px;width:14.5px;height:2px;background:#1f1f1f;border-radius:1px"></div><svg style="position:absolute;left:1974px;top:487.15px" width="14" height="14" viewBox="0 0 14 14"><path d="M1.5 1.5l11 11M12.5 1.5l-11 11" stroke="#21505c" stroke-width="2"/></svg><div style="position:absolute;left:820px;top:517.825px;width:1186px;height:1px;background:#e6e6e6"></div><svg style="position:absolute;left:839.4px;top:532.525px" width="20" height="20" viewBox="0 0 20 20"><g stroke="#1a1a1a" fill="none" stroke-width="2.3" stroke-linecap="butt" stroke-linejoin="miter"><path d="M10 2v16M2 10h16" stroke-width="2"/><path d="M6.4 5.2L10 1.6l3.6 3.6M6.4 14.8L10 18.4l3.6-3.6M5.2 6.4L1.6 10l3.6 3.6M14.8 6.4L18.4 10l-3.6 3.6"/></g></svg><div style="position:absolute;left:874px;top:528.525px;width:204px;height:28px;box-sizing:border-box;background:#fff;border:1px solid #e3e3e3;border-bottom:none;border-radius:4px 4px 0 0"></div><div style="position:absolute;left:874px;top:556.525px;width:204px;height:2px;background:#959595;border-radius:0 0 3px 3px"></div><div style="position:absolute;left:1098px;top:528.525px;width:283px;height:28px;box-sizing:border-box;background:#fff;border:1px solid #e3e3e3;border-bottom:none;border-radius:4px 4px 0 0"></div><div style="position:absolute;left:1098px;top:556.525px;width:283px;height:2px;background:#959595;border-radius:0 0 3px 3px"></div><div style="position:absolute;left:1402px;top:528.525px;width:148px;height:28px;box-sizing:border-box;background:#fff;border:1px solid #e3e3e3;border-bottom:none;border-radius:4px 4px 0 0"></div><div style="position:absolute;left:1402px;top:556.525px;width:148px;height:2px;background:#959595;border-radius:0 0 3px 3px"></div><div style="position:absolute;left:1570px;top:528.525px;width:149px;height:28px;box-sizing:border-box;background:#fff;border:1px solid #e3e3e3;border-bottom:none;border-radius:4px 4px 0 0"></div><div style="position:absolute;left:1570px;top:556.525px;width:149px;height:2px;background:#959595;border-radius:0 0 3px 3px"></div><div class="t" style="left:883.4px;top:533px;font-size:16.7px;line-height:20.04px;color:#222;font-weight:normal;font-style:normal;">visible</div><div class="t" style="left:1107.5px;top:533px;font-size:16.7px;line-height:20.04px;color:#222;font-weight:normal;font-style:normal;width:270.5px;overflow:hidden;">Hide or show this widget on the S...</div><div class="t" style="left:1411.5px;top:533px;font-size:16.7px;line-height:20.04px;color:#222;font-weight:normal;font-style:normal;width:134.5px;overflow:hidden;">true</div><div class="t" style="left:1579.5px;top:533px;font-size:16.7px;line-height:20.04px;color:#222;font-weight:normal;font-style:normal;">Boolean</div><svg style="position:absolute;left:1691px;top:534.025px" width="18" height="18" viewBox="0 0 18 18"><g fill="none" stroke="#222" stroke-width="2"><rect x="1.3" y="5.3" width="10.4" height="10.4" rx="1.8"/><path d="M5.5 5.3V3.1a1.8 1.8 0 0 1 1.8-1.8h7.4a1.8 1.8 0 0 1 1.8 1.8v7.4a1.8 1.8 0 0 1-1.8 1.8h-3"/></g></svg><div style="position:absolute;left:1766px;top:531.025px;width:38px;height:24px;box-sizing:border-box;background:#798ca1;border:1.8px solid #868b90;border-radius:12px"></div><div style="position:absolute;left:1766px;top:531.025px;width:26px;height:24px;box-sizing:border-box;background:#fff;border:2px solid #878c90;border-radius:12px"></div><div style="position:absolute;left:1773px;top:542.025px;width:14.5px;height:2px;background:#1f1f1f;border-radius:1px"></div><div style="position:absolute;left:1878px;top:531.025px;width:38px;height:24px;box-sizing:border-box;background:#798ca1;border:1.8px solid #868b90;border-radius:12px"></div><div style="position:absolute;left:1878px;top:531.025px;width:26px;height:24px;box-sizing:border-box;background:#fff;border:2px solid #878c90;border-radius:12px"></div><div style="position:absolute;left:1885px;top:542.025px;width:14.5px;height:2px;background:#1f1f1f;border-radius:1px"></div><svg style="position:absolute;left:1974px;top:536.025px" width="14" height="14" viewBox="0 0 14 14"><path d="M1.5 1.5l11 11M12.5 1.5l-11 11" stroke="#21505c" stroke-width="2"/></svg><div style="position:absolute;left:820px;top:566.7px;width:1186px;height:1px;background:#e6e6e6"></div><div style="position:absolute;left:820px;top:566.5px;width:1186px;height:38.5px;background:#f3f5f7"></div><div style="position:absolute;left:820px;top:604px;width:1186px;height:1px;background:#d9dcdf"></div><div style="position:absolute;left:820px;top:566.5px;width:1186px;height:1px;background:#dadcde"></div><div class="t" style="left:830.75px;top:576px;font-size:16.0px;line-height:19.2px;color:#1f1f1f;font-weight:bold;font-style:normal;">Advanced</div><div class="t" style="left:676px;width:600px;text-align:center;top:617px;font-size:16.08px;line-height:19.3px;color:#1f1f1f;font-weight:bold;font-style:normal;">Name</div><div class="t" style="left:940px;width:600px;text-align:center;top:618px;font-size:15.63px;line-height:18.76px;color:#1f1f1f;font-weight:bold;font-style:normal;">Description</div><div class="t" style="left:1176px;width:600px;text-align:center;top:617px;font-size:16.18px;line-height:19.42px;color:#1f1f1f;font-weight:bold;font-style:normal;">Default Value</div><div class="t" style="left:1344.5px;width:600px;text-align:center;top:617px;font-size:16.37px;line-height:19.64px;color:#1f1f1f;font-weight:bold;font-style:normal;">Data Type</div><div class="t" style="left:1485px;width:600px;text-align:center;top:618px;font-size:15.77px;line-height:18.92px;color:#1f1f1f;font-weight:bold;font-style:normal;">Translatable</div><div class="t" style="left:1597px;width:600px;text-align:center;top:618px;font-size:15.79px;line-height:18.95px;color:#1f1f1f;font-weight:bold;font-style:normal;">Deprecated</div><div style="position:absolute;left:820px;top:647px;width:1186px;height:1px;background:#e6e6e6"></div><div style="position:absolute;left:0;top:0;width:2024px;height:1124px;overflow:hidden"><svg style="position:absolute;left:839.4px;top:662.4px" width="20" height="20" viewBox="0 0 20 20"><g stroke="#1a1a1a" fill="none" stroke-width="2.3" stroke-linecap="butt" stroke-linejoin="miter"><path d="M10 2v16M2 10h16" stroke-width="2"/><path d="M6.4 5.2L10 1.6l3.6 3.6M6.4 14.8L10 18.4l3.6-3.6M5.2 6.4L1.6 10l3.6 3.6M14.8 6.4L18.4 10l-3.6 3.6"/></g></svg><div style="position:absolute;left:874px;top:658.4px;width:204px;height:28px;box-sizing:border-box;background:#fff;border:1px solid #e3e3e3;border-bottom:none;border-radius:4px 4px 0 0"></div><div style="position:absolute;left:874px;top:686.4px;width:204px;height:2px;background:#959595;border-radius:0 0 3px 3px"></div><div style="position:absolute;left:1098px;top:658.4px;width:283px;height:28px;box-sizing:border-box;background:#fff;border:1px solid #e3e3e3;border-bottom:none;border-radius:4px 4px 0 0"></div><div style="position:absolute;left:1098px;top:686.4px;width:283px;height:2px;background:#959595;border-radius:0 0 3px 3px"></div><div style="position:absolute;left:1402px;top:658.4px;width:148px;height:28px;box-sizing:border-box;background:#fff;border:1px solid #e3e3e3;border-bottom:none;border-radius:4px 4px 0 0"></div><div style="position:absolute;left:1402px;top:686.4px;width:148px;height:2px;background:#959595;border-radius:0 0 3px 3px"></div><div style="position:absolute;left:1570px;top:658.4px;width:149px;height:28px;box-sizing:border-box;background:#fff;border:1px solid #e3e3e3;border-bottom:none;border-radius:4px 4px 0 0"></div><div style="position:absolute;left:1570px;top:686.4px;width:149px;height:2px;background:#959595;border-radius:0 0 3px 3px"></div><div class="t" style="left:883.4px;top:663px;font-size:16.7px;line-height:20.04px;color:#222;font-weight:normal;font-style:normal;">busy</div><div class="t" style="left:1107.5px;top:663px;font-size:16.7px;line-height:20.04px;color:#222;font-weight:normal;font-style:normal;width:270.5px;overflow:hidden;">Whether the control is currently in...</div><div class="t" style="left:1411.5px;top:663px;font-size:16.7px;line-height:20.04px;color:#222;font-weight:normal;font-style:normal;width:134.5px;overflow:hidden;">false</div><div class="t" style="left:1579.5px;top:663px;font-size:16.7px;line-height:20.04px;color:#222;font-weight:normal;font-style:normal;">Boolean</div><svg style="position:absolute;left:1691px;top:663.9px" width="18" height="18" viewBox="0 0 18 18"><g fill="none" stroke="#222" stroke-width="2"><rect x="1.3" y="5.3" width="10.4" height="10.4" rx="1.8"/><path d="M5.5 5.3V3.1a1.8 1.8 0 0 1 1.8-1.8h7.4a1.8 1.8 0 0 1 1.8 1.8v7.4a1.8 1.8 0 0 1-1.8 1.8h-3"/></g></svg><div style="position:absolute;left:1766px;top:660.9px;width:38px;height:24px;box-sizing:border-box;background:#798ca1;border:1.8px solid #868b90;border-radius:12px"></div><div style="position:absolute;left:1766px;top:660.9px;width:26px;height:24px;box-sizing:border-box;background:#fff;border:2px solid #878c90;border-radius:12px"></div><div style="position:absolute;left:1773px;top:671.9px;width:14.5px;height:2px;background:#1f1f1f;border-radius:1px"></div><div style="position:absolute;left:1878px;top:660.9px;width:38px;height:24px;box-sizing:border-box;background:#798ca1;border:1.8px solid #868b90;border-radius:12px"></div><div style="position:absolute;left:1878px;top:660.9px;width:26px;height:24px;box-sizing:border-box;background:#fff;border:2px solid #878c90;border-radius:12px"></div><div style="position:absolute;left:1885px;top:671.9px;width:14.5px;height:2px;background:#1f1f1f;border-radius:1px"></div><svg style="position:absolute;left:1974px;top:665.9px" width="14" height="14" viewBox="0 0 14 14"><path d="M1.5 1.5l11 11M12.5 1.5l-11 11" stroke="#21505c" stroke-width="2"/></svg><div style="position:absolute;left:820px;top:696.575px;width:1186px;height:1px;background:#e6e6e6"></div><svg style="position:absolute;left:839.4px;top:711.275px" width="20" height="20" viewBox="0 0 20 20"><g stroke="#1a1a1a" fill="none" stroke-width="2.3" stroke-linecap="butt" stroke-linejoin="miter"><path d="M10 2v16M2 10h16" stroke-width="2"/><path d="M6.4 5.2L10 1.6l3.6 3.6M6.4 14.8L10 18.4l3.6-3.6M5.2 6.4L1.6 10l3.6 3.6M14.8 6.4L18.4 10l-3.6 3.6"/></g></svg><div style="position:absolute;left:874px;top:707.275px;width:204px;height:28px;box-sizing:border-box;background:#fff;border:1px solid #e3e3e3;border-bottom:none;border-radius:4px 4px 0 0"></div><div style="position:absolute;left:874px;top:735.275px;width:204px;height:2px;background:#959595;border-radius:0 0 3px 3px"></div><div style="position:absolute;left:1098px;top:707.275px;width:283px;height:28px;box-sizing:border-box;background:#fff;border:1px solid #e3e3e3;border-bottom:none;border-radius:4px 4px 0 0"></div><div style="position:absolute;left:1098px;top:735.275px;width:283px;height:2px;background:#959595;border-radius:0 0 3px 3px"></div><div style="position:absolute;left:1402px;top:707.275px;width:148px;height:28px;box-sizing:border-box;background:#fff;border:1px solid #e3e3e3;border-bottom:none;border-radius:4px 4px 0 0"></div><div style="position:absolute;left:1402px;top:735.275px;width:148px;height:2px;background:#959595;border-radius:0 0 3px 3px"></div><div style="position:absolute;left:1570px;top:707.275px;width:149px;height:28px;box-sizing:border-box;background:#fff;border:1px solid #e3e3e3;border-bottom:none;border-radius:4px 4px 0 0"></div><div style="position:absolute;left:1570px;top:735.275px;width:149px;height:2px;background:#959595;border-radius:0 0 3px 3px"></div><div class="t" style="left:883.4px;top:711px;font-size:16.7px;line-height:20.04px;color:#222;font-weight:normal;font-style:normal;">busyIndicatorDelay</div><div class="t" style="left:1107.5px;top:711px;font-size:16.7px;line-height:20.04px;color:#222;font-weight:normal;font-style:normal;width:270.5px;overflow:hidden;">The delay in milliseconds, after w...</div><div class="t" style="left:1411.5px;top:711px;font-size:16.7px;line-height:20.04px;color:#222;font-weight:normal;font-style:normal;width:134.5px;overflow:hidden;">1000</div><div class="t" style="left:1579.5px;top:711px;font-size:16.7px;line-height:20.04px;color:#222;font-weight:normal;font-style:normal;">Integer</div><svg style="position:absolute;left:1691px;top:712.775px" width="18" height="18" viewBox="0 0 18 18"><g fill="none" stroke="#222" stroke-width="2"><rect x="1.3" y="5.3" width="10.4" height="10.4" rx="1.8"/><path d="M5.5 5.3V3.1a1.8 1.8 0 0 1 1.8-1.8h7.4a1.8 1.8 0 0 1 1.8 1.8v7.4a1.8 1.8 0 0 1-1.8 1.8h-3"/></g></svg><div style="position:absolute;left:1766px;top:709.775px;width:38px;height:24px;box-sizing:border-box;background:#798ca1;border:1.8px solid #868b90;border-radius:12px"></div><div style="position:absolute;left:1766px;top:709.775px;width:26px;height:24px;box-sizing:border-box;background:#fff;border:2px solid #878c90;border-radius:12px"></div><div style="position:absolute;left:1773px;top:720.775px;width:14.5px;height:2px;background:#1f1f1f;border-radius:1px"></div><div style="position:absolute;left:1878px;top:709.775px;width:38px;height:24px;box-sizing:border-box;background:#798ca1;border:1.8px solid #868b90;border-radius:12px"></div><div style="position:absolute;left:1878px;top:709.775px;width:26px;height:24px;box-sizing:border-box;background:#fff;border:2px solid #878c90;border-radius:12px"></div><div style="position:absolute;left:1885px;top:720.775px;width:14.5px;height:2px;background:#1f1f1f;border-radius:1px"></div><svg style="position:absolute;left:1974px;top:714.775px" width="14" height="14" viewBox="0 0 14 14"><path d="M1.5 1.5l11 11M12.5 1.5l-11 11" stroke="#21505c" stroke-width="2"/></svg><div style="position:absolute;left:820px;top:745.45px;width:1186px;height:1px;background:#e6e6e6"></div><svg style="position:absolute;left:839.4px;top:760.15px" width="20" height="20" viewBox="0 0 20 20"><g stroke="#1a1a1a" fill="none" stroke-width="2.3" stroke-linecap="butt" stroke-linejoin="miter"><path d="M10 2v16M2 10h16" stroke-width="2"/><path d="M6.4 5.2L10 1.6l3.6 3.6M6.4 14.8L10 18.4l3.6-3.6M5.2 6.4L1.6 10l3.6 3.6M14.8 6.4L18.4 10l-3.6 3.6"/></g></svg><div style="position:absolute;left:874px;top:756.15px;width:204px;height:28px;box-sizing:border-box;background:#fff;border:1px solid #e3e3e3;border-bottom:none;border-radius:4px 4px 0 0"></div><div style="position:absolute;left:874px;top:784.15px;width:204px;height:2px;background:#959595;border-radius:0 0 3px 3px"></div><div style="position:absolute;left:1098px;top:756.15px;width:283px;height:28px;box-sizing:border-box;background:#fff;border:1px solid #e3e3e3;border-bottom:none;border-radius:4px 4px 0 0"></div><div style="position:absolute;left:1098px;top:784.15px;width:283px;height:2px;background:#959595;border-radius:0 0 3px 3px"></div><div style="position:absolute;left:1402px;top:756.15px;width:148px;height:28px;box-sizing:border-box;background:#fff;border:1px solid #e3e3e3;border-bottom:none;border-radius:4px 4px 0 0"></div><div style="position:absolute;left:1402px;top:784.15px;width:148px;height:2px;background:#959595;border-radius:0 0 3px 3px"></div><div style="position:absolute;left:1570px;top:756.15px;width:149px;height:28px;box-sizing:border-box;background:#fff;border:1px solid #e3e3e3;border-bottom:none;border-radius:4px 4px 0 0"></div><div style="position:absolute;left:1570px;top:784.15px;width:149px;height:2px;background:#959595;border-radius:0 0 3px 3px"></div><div class="t" style="left:883.4px;top:760px;font-size:16.7px;line-height:20.04px;color:#222;font-weight:normal;font-style:normal;">busyIndicatorSize</div><div class="t" style="left:1107.5px;top:760px;font-size:16.7px;line-height:20.04px;color:#222;font-weight:normal;font-style:normal;width:270.5px;overflow:hidden;">The size of the BusyIndicator. For ...</div><div class="t" style="left:1411.5px;top:760px;font-size:16.7px;line-height:20.04px;color:#222;font-weight:normal;font-style:normal;width:134.5px;overflow:hidden;">[Medium,Auto,...</div><div class="t" style="left:1579.5px;top:760px;font-size:16.7px;line-height:20.04px;color:#222;font-weight:normal;font-style:normal;">String</div><svg style="position:absolute;left:1691px;top:761.65px" width="18" height="18" viewBox="0 0 18 18"><g fill="none" stroke="#222" stroke-width="2"><rect x="1.3" y="5.3" width="10.4" height="10.4" rx="1.8"/><path d="M5.5 5.3V3.1a1.8 1.8 0 0 1 1.8-1.8h7.4a1.8 1.8 0 0 1 1.8 1.8v7.4a1.8 1.8 0 0 1-1.8 1.8h-3"/></g></svg><div style="position:absolute;left:1766px;top:758.65px;width:38px;height:24px;box-sizing:border-box;background:#798ca1;border:1.8px solid #868b90;border-radius:12px"></div><div style="position:absolute;left:1766px;top:758.65px;width:26px;height:24px;box-sizing:border-box;background:#fff;border:2px solid #878c90;border-radius:12px"></div><div style="position:absolute;left:1773px;top:769.65px;width:14.5px;height:2px;background:#1f1f1f;border-radius:1px"></div><div style="position:absolute;left:1878px;top:758.65px;width:38px;height:24px;box-sizing:border-box;background:#798ca1;border:1.8px solid #868b90;border-radius:12px"></div><div style="position:absolute;left:1878px;top:758.65px;width:26px;height:24px;box-sizing:border-box;background:#fff;border:2px solid #878c90;border-radius:12px"></div><div style="position:absolute;left:1885px;top:769.65px;width:14.5px;height:2px;background:#1f1f1f;border-radius:1px"></div><svg style="position:absolute;left:1974px;top:763.65px" width="14" height="14" viewBox="0 0 14 14"><path d="M1.5 1.5l11 11M12.5 1.5l-11 11" stroke="#21505c" stroke-width="2"/></svg><div style="position:absolute;left:820px;top:794.325px;width:1186px;height:1px;background:#e6e6e6"></div><svg style="position:absolute;left:839.4px;top:809.025px" width="20" height="20" viewBox="0 0 20 20"><g stroke="#1a1a1a" fill="none" stroke-width="2.3" stroke-linecap="butt" stroke-linejoin="miter"><path d="M10 2v16M2 10h16" stroke-width="2"/><path d="M6.4 5.2L10 1.6l3.6 3.6M6.4 14.8L10 18.4l3.6-3.6M5.2 6.4L1.6 10l3.6 3.6M14.8 6.4L18.4 10l-3.6 3.6"/></g></svg><div style="position:absolute;left:874px;top:805.025px;width:204px;height:28px;box-sizing:border-box;background:#fff;border:1px solid #e3e3e3;border-bottom:none;border-radius:4px 4px 0 0"></div><div style="position:absolute;left:874px;top:833.025px;width:204px;height:2px;background:#959595;border-radius:0 0 3px 3px"></div><div style="position:absolute;left:1098px;top:805.025px;width:283px;height:28px;box-sizing:border-box;background:#fff;border:1px solid #e3e3e3;border-bottom:none;border-radius:4px 4px 0 0"></div><div style="position:absolute;left:1098px;top:833.025px;width:283px;height:2px;background:#959595;border-radius:0 0 3px 3px"></div><div style="position:absolute;left:1402px;top:805.025px;width:148px;height:28px;box-sizing:border-box;background:#fff;border:1px solid #e3e3e3;border-bottom:none;border-radius:4px 4px 0 0"></div><div style="position:absolute;left:1402px;top:833.025px;width:148px;height:2px;background:#959595;border-radius:0 0 3px 3px"></div><div style="position:absolute;left:1570px;top:805.025px;width:149px;height:28px;box-sizing:border-box;background:#fff;border:1px solid #e3e3e3;border-bottom:none;border-radius:4px 4px 0 0"></div><div style="position:absolute;left:1570px;top:833.025px;width:149px;height:2px;background:#959595;border-radius:0 0 3px 3px"></div><div class="t" style="left:883.4px;top:809px;font-size:16.7px;line-height:20.04px;color:#222;font-weight:normal;font-style:normal;">counter</div><div class="t" style="left:1107.5px;top:809px;font-size:16.7px;line-height:20.04px;color:#222;font-weight:normal;font-style:normal;width:270.5px;overflow:hidden;">Defines the counter value of the li...</div><div class="t" style="left:1411.5px;top:809px;font-size:16.7px;line-height:20.04px;color:#222;font-weight:normal;font-style:normal;width:134.5px;overflow:hidden;">0</div><div class="t" style="left:1579.5px;top:809px;font-size:16.7px;line-height:20.04px;color:#222;font-weight:normal;font-style:normal;">Integer</div><svg style="position:absolute;left:1691px;top:810.525px" width="18" height="18" viewBox="0 0 18 18"><g fill="none" stroke="#222" stroke-width="2"><rect x="1.3" y="5.3" width="10.4" height="10.4" rx="1.8"/><path d="M5.5 5.3V3.1a1.8 1.8 0 0 1 1.8-1.8h7.4a1.8 1.8 0 0 1 1.8 1.8v7.4a1.8 1.8 0 0 1-1.8 1.8h-3"/></g></svg><div style="position:absolute;left:1766px;top:807.525px;width:38px;height:24px;box-sizing:border-box;background:#798ca1;border:1.8px solid #868b90;border-radius:12px"></div><div style="position:absolute;left:1766px;top:807.525px;width:26px;height:24px;box-sizing:border-box;background:#fff;border:2px solid #878c90;border-radius:12px"></div><div style="position:absolute;left:1773px;top:818.525px;width:14.5px;height:2px;background:#1f1f1f;border-radius:1px"></div><div style="position:absolute;left:1878px;top:807.525px;width:38px;height:24px;box-sizing:border-box;background:#798ca1;border:1.8px solid #868b90;border-radius:12px"></div><div style="position:absolute;left:1878px;top:807.525px;width:26px;height:24px;box-sizing:border-box;background:#fff;border:2px solid #878c90;border-radius:12px"></div><div style="position:absolute;left:1885px;top:818.525px;width:14.5px;height:2px;background:#1f1f1f;border-radius:1px"></div><svg style="position:absolute;left:1974px;top:812.525px" width="14" height="14" viewBox="0 0 14 14"><path d="M1.5 1.5l11 11M12.5 1.5l-11 11" stroke="#21505c" stroke-width="2"/></svg><div style="position:absolute;left:820px;top:843.2px;width:1186px;height:1px;background:#e6e6e6"></div><svg style="position:absolute;left:839.4px;top:857.9px" width="20" height="20" viewBox="0 0 20 20"><g stroke="#1a1a1a" fill="none" stroke-width="2.3" stroke-linecap="butt" stroke-linejoin="miter"><path d="M10 2v16M2 10h16" stroke-width="2"/><path d="M6.4 5.2L10 1.6l3.6 3.6M6.4 14.8L10 18.4l3.6-3.6M5.2 6.4L1.6 10l3.6 3.6M14.8 6.4L18.4 10l-3.6 3.6"/></g></svg><div style="position:absolute;left:874px;top:853.9px;width:204px;height:28px;box-sizing:border-box;background:#fff;border:1px solid #e3e3e3;border-bottom:none;border-radius:4px 4px 0 0"></div><div style="position:absolute;left:874px;top:881.9px;width:204px;height:2px;background:#959595;border-radius:0 0 3px 3px"></div><div style="position:absolute;left:1098px;top:853.9px;width:283px;height:28px;box-sizing:border-box;background:#fff;border:1px solid #e3e3e3;border-bottom:none;border-radius:4px 4px 0 0"></div><div style="position:absolute;left:1098px;top:881.9px;width:283px;height:2px;background:#959595;border-radius:0 0 3px 3px"></div><div style="position:absolute;left:1402px;top:853.9px;width:148px;height:28px;box-sizing:border-box;background:#fff;border:1px solid #e3e3e3;border-bottom:none;border-radius:4px 4px 0 0"></div><div style="position:absolute;left:1402px;top:881.9px;width:148px;height:2px;background:#959595;border-radius:0 0 3px 3px"></div><div style="position:absolute;left:1570px;top:853.9px;width:149px;height:28px;box-sizing:border-box;background:#fff;border:1px solid #e3e3e3;border-bottom:none;border-radius:4px 4px 0 0"></div><div style="position:absolute;left:1570px;top:881.9px;width:149px;height:2px;background:#959595;border-radius:0 0 3px 3px"></div><div class="t" style="left:883.4px;top:858px;font-size:16.7px;line-height:20.04px;color:#222;font-weight:normal;font-style:normal;">fieldGroupIds</div><div class="t" style="left:1107.5px;top:858px;font-size:16.7px;line-height:20.04px;color:#222;font-weight:normal;font-style:normal;width:270.5px;overflow:hidden;">The IDs of a logical FIELD GROUP...</div><div class="t" style="left:1411.5px;top:858px;font-size:16.7px;line-height:20.04px;color:#222;font-weight:normal;font-style:normal;width:134.5px;overflow:hidden;"></div><div class="t" style="left:1579.5px;top:858px;font-size:16.7px;line-height:20.04px;color:#222;font-weight:normal;font-style:normal;">String</div><svg style="position:absolute;left:1691px;top:859.4px" width="18" height="18" viewBox="0 0 18 18"><g fill="none" stroke="#222" stroke-width="2"><rect x="1.3" y="5.3" width="10.4" height="10.4" rx="1.8"/><path d="M5.5 5.3V3.1a1.8 1.8 0 0 1 1.8-1.8h7.4a1.8 1.8 0 0 1 1.8 1.8v7.4a1.8 1.8 0 0 1-1.8 1.8h-3"/></g></svg><div style="position:absolute;left:1766px;top:856.4px;width:38px;height:24px;box-sizing:border-box;background:#798ca1;border:1.8px solid #868b90;border-radius:12px"></div><div style="position:absolute;left:1766px;top:856.4px;width:26px;height:24px;box-sizing:border-box;background:#fff;border:2px solid #878c90;border-radius:12px"></div><div style="position:absolute;left:1773px;top:867.4px;width:14.5px;height:2px;background:#1f1f1f;border-radius:1px"></div><div style="position:absolute;left:1878px;top:856.4px;width:38px;height:24px;box-sizing:border-box;background:#798ca1;border:1.8px solid #868b90;border-radius:12px"></div><div style="position:absolute;left:1878px;top:856.4px;width:26px;height:24px;box-sizing:border-box;background:#fff;border:2px solid #878c90;border-radius:12px"></div><div style="position:absolute;left:1885px;top:867.4px;width:14.5px;height:2px;background:#1f1f1f;border-radius:1px"></div><svg style="position:absolute;left:1974px;top:861.4px" width="14" height="14" viewBox="0 0 14 14"><path d="M1.5 1.5l11 11M12.5 1.5l-11 11" stroke="#21505c" stroke-width="2"/></svg><div style="position:absolute;left:820px;top:892.075px;width:1186px;height:1px;background:#e6e6e6"></div><svg style="position:absolute;left:839.4px;top:906.775px" width="20" height="20" viewBox="0 0 20 20"><g stroke="#1a1a1a" fill="none" stroke-width="2.3" stroke-linecap="butt" stroke-linejoin="miter"><path d="M10 2v16M2 10h16" stroke-width="2"/><path d="M6.4 5.2L10 1.6l3.6 3.6M6.4 14.8L10 18.4l3.6-3.6M5.2 6.4L1.6 10l3.6 3.6M14.8 6.4L18.4 10l-3.6 3.6"/></g></svg><div style="position:absolute;left:874px;top:902.775px;width:204px;height:28px;box-sizing:border-box;background:#fff;border:1px solid #e3e3e3;border-bottom:none;border-radius:4px 4px 0 0"></div><div style="position:absolute;left:874px;top:930.775px;width:204px;height:2px;background:#959595;border-radius:0 0 3px 3px"></div><div style="position:absolute;left:1098px;top:902.775px;width:283px;height:28px;box-sizing:border-box;background:#fff;border:1px solid #e3e3e3;border-bottom:none;border-radius:4px 4px 0 0"></div><div style="position:absolute;left:1098px;top:930.775px;width:283px;height:2px;background:#959595;border-radius:0 0 3px 3px"></div><div style="position:absolute;left:1402px;top:902.775px;width:148px;height:28px;box-sizing:border-box;background:#fff;border:1px solid #e3e3e3;border-bottom:none;border-radius:4px 4px 0 0"></div><div style="position:absolute;left:1402px;top:930.775px;width:148px;height:2px;background:#959595;border-radius:0 0 3px 3px"></div><div style="position:absolute;left:1570px;top:902.775px;width:149px;height:28px;box-sizing:border-box;background:#fff;border:1px solid #e3e3e3;border-bottom:none;border-radius:4px 4px 0 0"></div><div style="position:absolute;left:1570px;top:930.775px;width:149px;height:2px;background:#959595;border-radius:0 0 3px 3px"></div><div class="t" style="left:883.4px;top:907px;font-size:16.7px;line-height:20.04px;color:#222;font-weight:normal;font-style:normal;">highlight</div><div class="t" style="left:1107.5px;top:907px;font-size:16.7px;line-height:20.04px;color:#222;font-weight:normal;font-style:normal;width:270.5px;overflow:hidden;">Defines the highlight state of the l...</div><div class="t" style="left:1411.5px;top:907px;font-size:16.7px;line-height:20.04px;color:#222;font-weight:normal;font-style:normal;width:134.5px;overflow:hidden;">None</div><div class="t" style="left:1579.5px;top:907px;font-size:16.7px;line-height:20.04px;color:#222;font-weight:normal;font-style:normal;">String</div><svg style="position:absolute;left:1691px;top:908.275px" width="18" height="18" viewBox="0 0 18 18"><g fill="none" stroke="#222" stroke-width="2"><rect x="1.3" y="5.3" width="10.4" height="10.4" rx="1.8"/><path d="M5.5 5.3V3.1a1.8 1.8 0 0 1 1.8-1.8h7.4a1.8 1.8 0 0 1 1.8 1.8v7.4a1.8 1.8 0 0 1-1.8 1.8h-3"/></g></svg><div style="position:absolute;left:1766px;top:905.275px;width:38px;height:24px;box-sizing:border-box;background:#798ca1;border:1.8px solid #868b90;border-radius:12px"></div><div style="position:absolute;left:1766px;top:905.275px;width:26px;height:24px;box-sizing:border-box;background:#fff;border:2px solid #878c90;border-radius:12px"></div><div style="position:absolute;left:1773px;top:916.275px;width:14.5px;height:2px;background:#1f1f1f;border-radius:1px"></div><div style="position:absolute;left:1878px;top:905.275px;width:38px;height:24px;box-sizing:border-box;background:#798ca1;border:1.8px solid #868b90;border-radius:12px"></div><div style="position:absolute;left:1878px;top:905.275px;width:26px;height:24px;box-sizing:border-box;background:#fff;border:2px solid #878c90;border-radius:12px"></div><div style="position:absolute;left:1885px;top:916.275px;width:14.5px;height:2px;background:#1f1f1f;border-radius:1px"></div><svg style="position:absolute;left:1974px;top:910.275px" width="14" height="14" viewBox="0 0 14 14"><path d="M1.5 1.5l11 11M12.5 1.5l-11 11" stroke="#21505c" stroke-width="2"/></svg><div style="position:absolute;left:820px;top:940.95px;width:1186px;height:1px;background:#e6e6e6"></div><svg style="position:absolute;left:839.4px;top:955.65px" width="20" height="20" viewBox="0 0 20 20"><g stroke="#1a1a1a" fill="none" stroke-width="2.3" stroke-linecap="butt" stroke-linejoin="miter"><path d="M10 2v16M2 10h16" stroke-width="2"/><path d="M6.4 5.2L10 1.6l3.6 3.6M6.4 14.8L10 18.4l3.6-3.6M5.2 6.4L1.6 10l3.6 3.6M14.8 6.4L18.4 10l-3.6 3.6"/></g></svg><div style="position:absolute;left:874px;top:951.65px;width:204px;height:28px;box-sizing:border-box;background:#fff;border:1px solid #e3e3e3;border-bottom:none;border-radius:4px 4px 0 0"></div><div style="position:absolute;left:874px;top:979.65px;width:204px;height:2px;background:#959595;border-radius:0 0 3px 3px"></div><div style="position:absolute;left:1098px;top:951.65px;width:283px;height:28px;box-sizing:border-box;background:#fff;border:1px solid #e3e3e3;border-bottom:none;border-radius:4px 4px 0 0"></div><div style="position:absolute;left:1098px;top:979.65px;width:283px;height:2px;background:#959595;border-radius:0 0 3px 3px"></div><div style="position:absolute;left:1402px;top:951.65px;width:148px;height:28px;box-sizing:border-box;background:#fff;border:1px solid #e3e3e3;border-bottom:none;border-radius:4px 4px 0 0"></div><div style="position:absolute;left:1402px;top:979.65px;width:148px;height:2px;background:#959595;border-radius:0 0 3px 3px"></div><div style="position:absolute;left:1570px;top:951.65px;width:149px;height:28px;box-sizing:border-box;background:#fff;border:1px solid #e3e3e3;border-bottom:none;border-radius:4px 4px 0 0"></div><div style="position:absolute;left:1570px;top:979.65px;width:149px;height:2px;background:#959595;border-radius:0 0 3px 3px"></div><div class="t" style="left:883.4px;top:956px;font-size:16.7px;line-height:20.04px;color:#222;font-weight:normal;font-style:normal;">highlightText</div><div class="t" style="left:1107.5px;top:956px;font-size:16.7px;line-height:20.04px;color:#222;font-weight:normal;font-style:normal;width:270.5px;overflow:hidden;">Defines the semantics of the highl...</div><div class="t" style="left:1411.5px;top:956px;font-size:16.7px;line-height:20.04px;color:#222;font-weight:normal;font-style:normal;width:134.5px;overflow:hidden;"></div><div class="t" style="left:1579.5px;top:956px;font-size:16.7px;line-height:20.04px;color:#222;font-weight:normal;font-style:normal;">String</div><svg style="position:absolute;left:1691px;top:957.15px" width="18" height="18" viewBox="0 0 18 18"><g fill="none" stroke="#222" stroke-width="2"><rect x="1.3" y="5.3" width="10.4" height="10.4" rx="1.8"/><path d="M5.5 5.3V3.1a1.8 1.8 0 0 1 1.8-1.8h7.4a1.8 1.8 0 0 1 1.8 1.8v7.4a1.8 1.8 0 0 1-1.8 1.8h-3"/></g></svg><div style="position:absolute;left:1766px;top:954.15px;width:38px;height:24px;box-sizing:border-box;background:#798ca1;border:1.8px solid #868b90;border-radius:12px"></div><div style="position:absolute;left:1766px;top:954.15px;width:26px;height:24px;box-sizing:border-box;background:#fff;border:2px solid #878c90;border-radius:12px"></div><div style="position:absolute;left:1773px;top:965.15px;width:14.5px;height:2px;background:#1f1f1f;border-radius:1px"></div><div style="position:absolute;left:1878px;top:954.15px;width:38px;height:24px;box-sizing:border-box;background:#798ca1;border:1.8px solid #868b90;border-radius:12px"></div><div style="position:absolute;left:1878px;top:954.15px;width:26px;height:24px;box-sizing:border-box;background:#fff;border:2px solid #878c90;border-radius:12px"></div><div style="position:absolute;left:1885px;top:965.15px;width:14.5px;height:2px;background:#1f1f1f;border-radius:1px"></div><svg style="position:absolute;left:1974px;top:959.15px" width="14" height="14" viewBox="0 0 14 14"><path d="M1.5 1.5l11 11M12.5 1.5l-11 11" stroke="#21505c" stroke-width="2"/></svg><div style="position:absolute;left:820px;top:989.825px;width:1186px;height:1px;background:#e6e6e6"></div><svg style="position:absolute;left:839.4px;top:1004.525px" width="20" height="20" viewBox="0 0 20 20"><g stroke="#1a1a1a" fill="none" stroke-width="2.3" stroke-linecap="butt" stroke-linejoin="miter"><path d="M10 2v16M2 10h16" stroke-width="2"/><path d="M6.4 5.2L10 1.6l3.6 3.6M6.4 14.8L10 18.4l3.6-3.6M5.2 6.4L1.6 10l3.6 3.6M14.8 6.4L18.4 10l-3.6 3.6"/></g></svg><div style="position:absolute;left:874px;top:1000.525px;width:204px;height:28px;box-sizing:border-box;background:#fff;border:1px solid #e3e3e3;border-bottom:none;border-radius:4px 4px 0 0"></div><div style="position:absolute;left:874px;top:1028.525px;width:204px;height:2px;background:#959595;border-radius:0 0 3px 3px"></div><div style="position:absolute;left:1098px;top:1000.525px;width:283px;height:28px;box-sizing:border-box;background:#fff;border:1px solid #e3e3e3;border-bottom:none;border-radius:4px 4px 0 0"></div><div style="position:absolute;left:1098px;top:1028.525px;width:283px;height:2px;background:#959595;border-radius:0 0 3px 3px"></div><div style="position:absolute;left:1402px;top:1000.525px;width:148px;height:28px;box-sizing:border-box;background:#fff;border:1px solid #e3e3e3;border-bottom:none;border-radius:4px 4px 0 0"></div><div style="position:absolute;left:1402px;top:1028.525px;width:148px;height:2px;background:#959595;border-radius:0 0 3px 3px"></div><div style="position:absolute;left:1570px;top:1000.525px;width:149px;height:28px;box-sizing:border-box;background:#fff;border:1px solid #e3e3e3;border-bottom:none;border-radius:4px 4px 0 0"></div><div style="position:absolute;left:1570px;top:1028.525px;width:149px;height:2px;background:#959595;border-radius:0 0 3px 3px"></div><div class="t" style="left:883.4px;top:1005px;font-size:16.7px;line-height:20.04px;color:#222;font-weight:normal;font-style:normal;">navigated</div><div class="t" style="left:1107.5px;top:1005px;font-size:16.7px;line-height:20.04px;color:#222;font-weight:normal;font-style:normal;width:270.5px;overflow:hidden;">The navigated state of the list ite...</div><div class="t" style="left:1411.5px;top:1005px;font-size:16.7px;line-height:20.04px;color:#222;font-weight:normal;font-style:normal;width:134.5px;overflow:hidden;">false</div><div class="t" style="left:1579.5px;top:1005px;font-size:16.7px;line-height:20.04px;color:#222;font-weight:normal;font-style:normal;">Boolean</div><svg style="position:absolute;left:1691px;top:1006.025px" width="18" height="18" viewBox="0 0 18 18"><g fill="none" stroke="#222" stroke-width="2"><rect x="1.3" y="5.3" width="10.4" height="10.4" rx="1.8"/><path d="M5.5 5.3V3.1a1.8 1.8 0 0 1 1.8-1.8h7.4a1.8 1.8 0 0 1 1.8 1.8v7.4a1.8 1.8 0 0 1-1.8 1.8h-3"/></g></svg><div style="position:absolute;left:1766px;top:1003.025px;width:38px;height:24px;box-sizing:border-box;background:#798ca1;border:1.8px solid #868b90;border-radius:12px"></div><div style="position:absolute;left:1766px;top:1003.025px;width:26px;height:24px;box-sizing:border-box;background:#fff;border:2px solid #878c90;border-radius:12px"></div><div style="position:absolute;left:1773px;top:1014.025px;width:14.5px;height:2px;background:#1f1f1f;border-radius:1px"></div><div style="position:absolute;left:1878px;top:1003.025px;width:38px;height:24px;box-sizing:border-box;background:#798ca1;border:1.8px solid #868b90;border-radius:12px"></div><div style="position:absolute;left:1878px;top:1003.025px;width:26px;height:24px;box-sizing:border-box;background:#fff;border:2px solid #878c90;border-radius:12px"></div><div style="position:absolute;left:1885px;top:1014.025px;width:14.5px;height:2px;background:#1f1f1f;border-radius:1px"></div><svg style="position:absolute;left:1974px;top:1008.025px" width="14" height="14" viewBox="0 0 14 14"><path d="M1.5 1.5l11 11M12.5 1.5l-11 11" stroke="#21505c" stroke-width="2"/></svg><div style="position:absolute;left:820px;top:1038.7px;width:1186px;height:1px;background:#e6e6e6"></div><svg style="position:absolute;left:839.4px;top:1053.4px" width="20" height="20" viewBox="0 0 20 20"><g stroke="#1a1a1a" fill="none" stroke-width="2.3" stroke-linecap="butt" stroke-linejoin="miter"><path d="M10 2v16M2 10h16" stroke-width="2"/><path d="M6.4 5.2L10 1.6l3.6 3.6M6.4 14.8L10 18.4l3.6-3.6M5.2 6.4L1.6 10l3.6 3.6M14.8 6.4L18.4 10l-3.6 3.6"/></g></svg><div style="position:absolute;left:874px;top:1049.4px;width:204px;height:28px;box-sizing:border-box;background:#fff;border:1px solid #e3e3e3;border-bottom:none;border-radius:4px 4px 0 0"></div><div style="position:absolute;left:874px;top:1077.4px;width:204px;height:2px;background:#959595;border-radius:0 0 3px 3px"></div><div style="position:absolute;left:1098px;top:1049.4px;width:283px;height:28px;box-sizing:border-box;background:#fff;border:1px solid #e3e3e3;border-bottom:none;border-radius:4px 4px 0 0"></div><div style="position:absolute;left:1098px;top:1077.4px;width:283px;height:2px;background:#959595;border-radius:0 0 3px 3px"></div><div style="position:absolute;left:1402px;top:1049.4px;width:148px;height:28px;box-sizing:border-box;background:#fff;border:1px solid #e3e3e3;border-bottom:none;border-radius:4px 4px 0 0"></div><div style="position:absolute;left:1402px;top:1077.4px;width:148px;height:2px;background:#959595;border-radius:0 0 3px 3px"></div><div style="position:absolute;left:1570px;top:1049.4px;width:149px;height:28px;box-sizing:border-box;background:#fff;border:1px solid #e3e3e3;border-bottom:none;border-radius:4px 4px 0 0"></div><div style="position:absolute;left:1570px;top:1077.4px;width:149px;height:2px;background:#959595;border-radius:0 0 3px 3px"></div><div class="t" style="left:883.4px;top:1054px;font-size:16.7px;line-height:20.04px;color:#222;font-weight:normal;font-style:normal;">tooltip</div><div class="t" style="left:1107.5px;top:1054px;font-size:16.7px;line-height:20.04px;color:#222;font-weight:normal;font-style:normal;width:270.5px;overflow:hidden;">The tooltip that should be shown ...</div><div class="t" style="left:1411.5px;top:1054px;font-size:16.7px;line-height:20.04px;color:#222;font-weight:normal;font-style:normal;width:134.5px;overflow:hidden;"></div><div class="t" style="left:1579.5px;top:1054px;font-size:16.7px;line-height:20.04px;color:#222;font-weight:normal;font-style:normal;">String</div><svg style="position:absolute;left:1691px;top:1054.9px" width="18" height="18" viewBox="0 0 18 18"><g fill="none" stroke="#222" stroke-width="2"><rect x="1.3" y="5.3" width="10.4" height="10.4" rx="1.8"/><path d="M5.5 5.3V3.1a1.8 1.8 0 0 1 1.8-1.8h7.4a1.8 1.8 0 0 1 1.8 1.8v7.4a1.8 1.8 0 0 1-1.8 1.8h-3"/></g></svg><div style="position:absolute;left:1766px;top:1051.9px;width:38px;height:24px;background:#145a85;border-radius:12px"></div><div style="position:absolute;left:1777.5px;top:1052.4px;width:25.5px;height:23px;box-sizing:border-box;background:#e6f3fa;border:2px solid #16587c;border-radius:12px"></div><svg style="position:absolute;left:1782.5px;top:1056.9px" width="16" height="14" viewBox="0 0 16 14"><path d="M2.3 7.8l3.6 3.6L13.3 3" fill="none" stroke="#3a3a3a" stroke-width="1.7"/></svg><div style="position:absolute;left:1878px;top:1051.9px;width:38px;height:24px;box-sizing:border-box;background:#798ca1;border:1.8px solid #868b90;border-radius:12px"></div><div style="position:absolute;left:1878px;top:1051.9px;width:26px;height:24px;box-sizing:border-box;background:#fff;border:2px solid #878c90;border-radius:12px"></div><div style="position:absolute;left:1885px;top:1062.9px;width:14.5px;height:2px;background:#1f1f1f;border-radius:1px"></div><svg style="position:absolute;left:1974px;top:1056.9px" width="14" height="14" viewBox="0 0 14 14"><path d="M1.5 1.5l11 11M12.5 1.5l-11 11" stroke="#21505c" stroke-width="2"/></svg><div style="position:absolute;left:820px;top:1087.575px;width:1186px;height:1px;background:#e6e6e6"></div><svg style="position:absolute;left:839.4px;top:1102.275px" width="20" height="20" viewBox="0 0 20 20"><g stroke="#1a1a1a" fill="none" stroke-width="2.3" stroke-linecap="butt" stroke-linejoin="miter"><path d="M10 2v16M2 10h16" stroke-width="2"/><path d="M6.4 5.2L10 1.6l3.6 3.6M6.4 14.8L10 18.4l3.6-3.6M5.2 6.4L1.6 10l3.6 3.6M14.8 6.4L18.4 10l-3.6 3.6"/></g></svg><div style="position:absolute;left:874px;top:1098.275px;width:204px;height:28px;box-sizing:border-box;background:#fff;border:1px solid #e3e3e3;border-bottom:none;border-radius:4px 4px 0 0"></div><div style="position:absolute;left:874px;top:1126.275px;width:204px;height:2px;background:#959595;border-radius:0 0 3px 3px"></div><div style="position:absolute;left:1098px;top:1098.275px;width:283px;height:28px;box-sizing:border-box;background:#fff;border:1px solid #e3e3e3;border-bottom:none;border-radius:4px 4px 0 0"></div><div style="position:absolute;left:1098px;top:1126.275px;width:283px;height:2px;background:#959595;border-radius:0 0 3px 3px"></div><div style="position:absolute;left:1402px;top:1098.275px;width:148px;height:28px;box-sizing:border-box;background:#fff;border:1px solid #e3e3e3;border-bottom:none;border-radius:4px 4px 0 0"></div><div style="position:absolute;left:1402px;top:1126.275px;width:148px;height:2px;background:#959595;border-radius:0 0 3px 3px"></div><div style="position:absolute;left:1570px;top:1098.275px;width:149px;height:28px;box-sizing:border-box;background:#fff;border:1px solid #e3e3e3;border-bottom:none;border-radius:4px 4px 0 0"></div><div style="position:absolute;left:1570px;top:1126.275px;width:149px;height:2px;background:#959595;border-radius:0 0 3px 3px"></div><div class="t" style="left:883.4px;top:1102px;font-size:16.7px;line-height:20.04px;color:#222;font-weight:normal;font-style:normal;">unread</div><div class="t" style="left:1107.5px;top:1102px;font-size:16.7px;line-height:20.04px;color:#222;font-weight:normal;font-style:normal;width:270.5px;overflow:hidden;">Activates the unread indicator for ...</div><div class="t" style="left:1411.5px;top:1102px;font-size:16.7px;line-height:20.04px;color:#222;font-weight:normal;font-style:normal;width:134.5px;overflow:hidden;">false</div><div class="t" style="left:1579.5px;top:1102px;font-size:16.7px;line-height:20.04px;color:#222;font-weight:normal;font-style:normal;">Boolean</div><svg style="position:absolute;left:1691px;top:1103.775px" width="18" height="18" viewBox="0 0 18 18"><g fill="none" stroke="#222" stroke-width="2"><rect x="1.3" y="5.3" width="10.4" height="10.4" rx="1.8"/><path d="M5.5 5.3V3.1a1.8 1.8 0 0 1 1.8-1.8h7.4a1.8 1.8 0 0 1 1.8 1.8v7.4a1.8 1.8 0 0 1-1.8 1.8h-3"/></g></svg><div style="position:absolute;left:1766px;top:1100.775px;width:38px;height:24px;box-sizing:border-box;background:#798ca1;border:1.8px solid #868b90;border-radius:12px"></div><div style="position:absolute;left:1766px;top:1100.775px;width:26px;height:24px;box-sizing:border-box;background:#fff;border:2px solid #878c90;border-radius:12px"></div><div style="position:absolute;left:1773px;top:1111.775px;width:14.5px;height:2px;background:#1f1f1f;border-radius:1px"></div><div style="position:absolute;left:1878px;top:1100.775px;width:38px;height:24px;box-sizing:border-box;background:#798ca1;border:1.8px solid #868b90;border-radius:12px"></div><div style="position:absolute;left:1878px;top:1100.775px;width:26px;height:24px;box-sizing:border-box;background:#fff;border:2px solid #878c90;border-radius:12px"></div><div style="position:absolute;left:1885px;top:1111.775px;width:14.5px;height:2px;background:#1f1f1f;border-radius:1px"></div><svg style="position:absolute;left:1974px;top:1105.775px" width="14" height="14" viewBox="0 0 14 14"><path d="M1.5 1.5l11 11M12.5 1.5l-11 11" stroke="#21505c" stroke-width="2"/></svg><div style="position:absolute;left:820px;top:1136.45px;width:1186px;height:1px;background:#e6e6e6"></div></div><div style="position:absolute;left:820px;top:1124px;width:1204px;height:1px;background:#dcdde0"></div><div style="position:absolute;left:820px;top:1125px;width:1204px;height:50px;background:#f3f5f7"></div><div style="position:absolute;left:2006px;top:293.6px;width:18px;height:810.8000000000001px;background:#7b93a8;border-radius:9px"></div></body></html>
